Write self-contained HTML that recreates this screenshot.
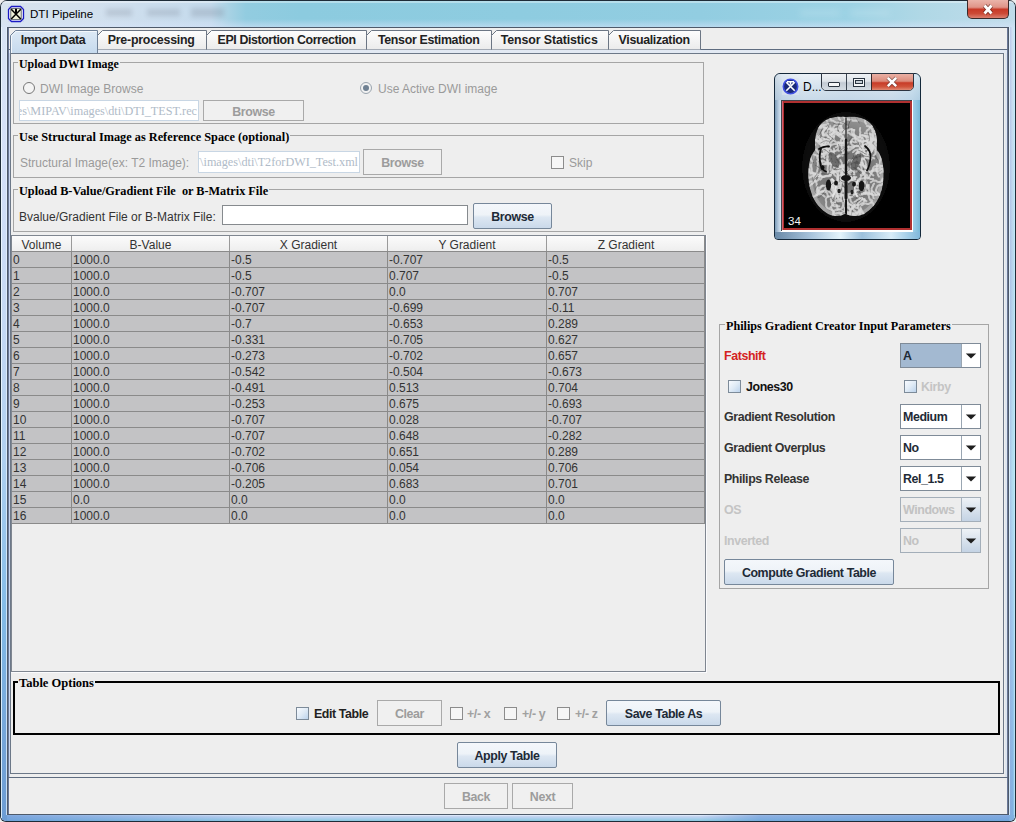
<!DOCTYPE html>
<html><head><meta charset="utf-8"><style>
html,body{margin:0;padding:0;}
body{width:1016px;height:822px;position:relative;overflow:hidden;background:#eeeeee;font-family:"Liberation Sans",sans-serif;}
.a{position:absolute;box-sizing:border-box;}
.t{line-height:20px;white-space:pre;}
</style></head><body>

<div class="a" style="left:0px;top:0px;width:1016px;height:822px;background:#1e2c38;border-radius:7px 7px 6px 6px;"></div>
<div class="a" style="left:1px;top:1px;width:1014px;height:820px;border-radius:6px 6px 5px 5px;background:#d4e0ee;"></div>
<div class="a" style="left:1px;top:27px;width:6px;height:794px;border-radius:0 0 0 5px;background:linear-gradient(#d8e4f4 0px,#d4e0f8 130px,#c4d8f4 300px,#b0d0f0 430px,#84bce8 580px,#74a4d8 720px,#6c9cd4 793px);"></div>
<div class="a" style="left:1009px;top:27px;width:6px;height:794px;border-radius:0 0 5px 0;background:linear-gradient(#d0e0f2 0px,#b8d4ec 250px,#b4dcf0 450px,#a0c8ec 600px,#80b0e0 793px);"></div>
<div class="a" style="left:1010px;top:27px;width:5px;height:788px;background:linear-gradient(90deg,rgba(150,160,220,.35),rgba(150,200,240,0) 50%,rgba(180,240,250,.5));"></div>
<div class="a" style="left:7px;top:815px;width:1002px;height:6px;background:linear-gradient(#e4f0ff 0,#c4d4f0 1.5px,#b0d0ee 3px,#98cce4 5px,#88c8e0 6px);"></div>
<div class="a" style="left:7px;top:815px;width:294px;height:6px;background:linear-gradient(90deg,rgba(100,150,215,.75) 0,rgba(100,150,215,.55) 80px,rgba(100,150,215,0) 280px);"></div>
<div class="a" style="left:700px;top:815px;width:309px;height:6px;background:linear-gradient(90deg,rgba(100,150,215,0) 0,rgba(100,150,215,.6) 60px,rgba(100,150,215,.7) 308px);"></div>
<div class="a" style="left:1px;top:27px;width:1px;height:791px;background:rgba(240,250,255,.8);"></div>
<div class="a" style="left:6px;top:27px;width:1px;height:788px;background:rgba(230,242,255,.75);"></div>
<div class="a" style="left:1009px;top:27px;width:1px;height:788px;background:rgba(230,242,255,.75);"></div>
<div class="a" style="left:1014px;top:27px;width:1px;height:791px;background:rgba(200,235,250,.5);"></div>
<div class="a" style="left:1px;top:1px;width:1014px;height:26px;border-radius:6px 6px 0 0;background:linear-gradient(90deg,#d8e4ee 0px,#d2e0ee 90px,#c4daec 210px,#a8d2e4 228px,#92cce0 245px,#8ccbdf 300px,#8ecce0 520px,#92cde1 700px,#9cd2e4 850px,#b0d8e6 920px,#c0dcea 1016px);"></div>
<div class="a" style="left:1px;top:19px;width:1014px;height:8px;background:linear-gradient(rgba(225,235,250,0),rgba(215,228,250,.55));"></div>
<div class="a" style="left:1px;top:1px;width:1014px;height:2px;border-radius:6px 6px 0 0;background:rgba(255,255,255,.35);"></div>
<div class="a" style="left:100px;top:5px;width:140px;height:16px;filter:blur(2.5px);opacity:.13;"><div class="a" style="left:6px;top:4px;width:26px;height:7px;background:#223;"></div><div class="a" style="left:47px;top:4px;width:33px;height:7px;background:#223;"></div><div class="a" style="left:91px;top:3px;width:33px;height:9px;background:#223;"></div></div>
<div class="a" style="left:770px;top:6px;width:130px;height:14px;filter:blur(3px);opacity:.12;"><div class="a" style="left:30px;top:3px;width:40px;height:8px;background:#fff;"></div><div class="a" style="left:80px;top:3px;width:40px;height:8px;background:#fff;"></div></div>
<svg class="a" style="left:0px;top:0px" width="30" height="28" viewBox="0 0 30 28"><rect x="8" y="6" width="16" height="16" fill="#c4ccee" opacity=".55"/><path d="M11.5 6.5H20.5L23.5 9.5V18.5L20.5 21.5H11.5L8.5 18.5V9.5Z" fill="#f4f4fa" stroke="#1a1ac4" stroke-width="1.3"/><rect x="10.8" y="8.6" width="10.4" height="10.8" fill="#eef0d8" stroke="#505860" stroke-width=".8"/><path d="M11.2 9.2L20.8 19M20.8 9.2L11.2 19" stroke="#000" stroke-width="1.5"/><path d="M16 8.8V14" stroke="#000" stroke-width="2"/></svg>
<div class="a t" style="left:30px;top:4px;font-size:11.6px;font-weight:normal;font-family:'Liberation Sans',sans-serif;color:#000;">DTI Pipeline</div>
<div class="a" style="left:967px;top:0px;width:42px;height:19px;border:1px solid #3a2a2a;border-top:none;border-radius:0 0 5px 5px;background:linear-gradient(#eab4aa 0%,#e09488 40%,#c83a28 52%,#cc4a36 75%,#dc8070 100%);"></div>
<svg class="a" style="left:981px;top:3px" width="14" height="13" viewBox="0 0 14 13"><path d="M3.5 2.5L10.5 10.5M10.5 2.5L3.5 10.5" stroke="#4a1a14" stroke-width="4.4" opacity=".6"/><path d="M3.5 2.5L10.5 10.5M10.5 2.5L3.5 10.5" stroke="#fff" stroke-width="2.8"/></svg>
<div class="a" style="left:7px;top:27px;width:1002px;height:788px;border:1px solid #4e5a6a;background:#eeeeee;"></div>
<div class="a" style="left:8px;top:28px;width:1px;height:786px;background:#6a7898;"></div>
<div class="a" style="left:9px;top:50px;width:1px;height:727px;background:#c8d6ee;"></div>
<div class="a" style="left:1007px;top:28px;width:1px;height:786px;background:#6a7898;"></div>
<div class="a" style="left:1005px;top:50px;width:2px;height:727px;background:#dde6f0;"></div>
<div class="a" style="left:8px;top:49px;width:1000px;height:729px;border:1px solid #5e6c80;border-left:none;border-right:none;"></div>
<div class="a" style="left:9px;top:50px;width:998px;height:3px;background:#e2e9f3;"></div>
<div class="a" style="left:10px;top:53px;width:994px;height:721px;border:1px solid #6c7888;"></div>
<svg class="a" style="left:0;top:0" width="1016" height="60"><defs><linearGradient id="tg" x1="0" y1="0" x2="0" y2="1"><stop offset="0" stop-color="#fdfdfd"/><stop offset="1" stop-color="#ebebeb"/></linearGradient><linearGradient id="sg" x1="0" y1="0" x2="0" y2="1"><stop offset="0" stop-color="#dde9f5"/><stop offset="1" stop-color="#c6daee"/></linearGradient></defs><path d="M97.5 49.5V35.5L102.5 30.5H206.5V49.5" fill="url(#tg)" stroke="#6c7684" stroke-width="1" stroke-linejoin="miter"/><path d="M206.5 49.5V35.5L211.5 30.5H366.5V49.5" fill="url(#tg)" stroke="#6c7684" stroke-width="1" stroke-linejoin="miter"/><path d="M366.5 49.5V35.5L371.5 30.5H491.5V49.5" fill="url(#tg)" stroke="#6c7684" stroke-width="1" stroke-linejoin="miter"/><path d="M491.5 49.5V35.5L496.5 30.5H608.5V49.5" fill="url(#tg)" stroke="#6c7684" stroke-width="1" stroke-linejoin="miter"/><path d="M608.5 49.5V35.5L613.5 30.5H700.5V49.5" fill="url(#tg)" stroke="#6c7684" stroke-width="1" stroke-linejoin="miter"/><path d="M10.5 53V35.5L15.5 30.5H97.5V53" fill="url(#sg)" stroke="#6f8198" stroke-width="1"/><path d="M11.5 53V36L16 31.5H96.5" fill="none" stroke="#f4f8fc" stroke-width="1"/></svg>
<div class="a t" style="left:-47.3px;width:200px;text-align:center;top:30px;font-size:12.4px;font-weight:bold;color:#222;letter-spacing:-0.395px;text-indent:0.395px">Import Data</div>
<div class="a t" style="left:51.1px;width:200px;text-align:center;top:30px;font-size:12.4px;font-weight:bold;color:#222;letter-spacing:-0.234px;text-indent:0.234px">Pre-processing</div>
<div class="a t" style="left:186.4px;width:200px;text-align:center;top:30px;font-size:12.4px;font-weight:bold;color:#222;letter-spacing:-0.402px;text-indent:0.402px">EPI Distortion Correction</div>
<div class="a t" style="left:328.6px;width:200px;text-align:center;top:30px;font-size:12.4px;font-weight:bold;color:#222;letter-spacing:-0.331px;text-indent:0.331px">Tensor Estimation</div>
<div class="a t" style="left:449.2px;width:200px;text-align:center;top:30px;font-size:12.4px;font-weight:bold;color:#222;letter-spacing:-0.121px;text-indent:0.121px">Tensor Statistics</div>
<div class="a t" style="left:554.0px;width:200px;text-align:center;top:30px;font-size:12.4px;font-weight:bold;color:#222;letter-spacing:-0.337px;text-indent:0.337px">Visualization</div>
<div class="a" style="left:13px;top:62px;width:691px;height:62px;border:1px solid #a5a5a5;"></div>
<div class="a t" style="left:18px;top:54px;padding:0 1px;background:#eeeeee;font-size:11.9px;font-weight:bold;font-family:'Liberation Serif',serif;color:#000;">Upload DWI Image</div>
<div class="a" style="left:23px;top:82px;width:12px;height:12px;border:1px solid #777;border-radius:50%;box-sizing:border-box;background:#f4f4f4;"></div>
<div class="a t" style="left:40px;top:79px;font-size:12px;font-weight:normal;font-family:'Liberation Sans',sans-serif;color:#9a9a9a;">DWI Image Browse</div>
<div class="a" style="left:360px;top:82px;width:12px;height:12px;border:1px solid #9aa4ae;border-radius:50%;box-sizing:border-box;background:#f2f2f2;"></div>
<div class="a" style="left:363px;top:85px;width:6px;height:6px;border-radius:50%;background:#6f8092;"></div>
<div class="a t" style="left:378px;top:79px;font-size:12px;font-weight:normal;font-family:'Liberation Sans',sans-serif;color:#9a9a9a;">Use Active DWI image</div>
<div class="a" style="left:19px;top:100px;width:180px;height:21px;border:1px solid #c8d6e4;background:#fff;overflow:hidden;"></div>
<div class="a" style="left:20px;top:101px;width:177px;height:19px;overflow:hidden;"><div class="a t" style="right:0px;top:0px;font-family:'Liberation Serif',serif;font-size:12.2px;color:#b0bbc8;">es\MIPAV\images\dti\DTI_TEST.rec</div></div>
<div class="a" style="left:203px;top:100px;width:101px;height:21px;border:1px solid #a9a9a9;background:#f0f0f0;"></div>
<div class="a t" style="left:203px;width:101px;text-align:center;top:102px;font-size:12.4px;font-weight:bold;font-family:'Liberation Sans',sans-serif;color:#9c9c9c;letter-spacing:-0.4px;">Browse</div>
<div class="a" style="left:13px;top:135px;width:691px;height:43px;border:1px solid #a5a5a5;"></div>
<div class="a t" style="left:18px;top:127px;padding:0 1px;background:#eeeeee;font-size:12.3px;font-weight:bold;font-family:'Liberation Serif',serif;color:#000;">Use Structural Image as Reference Space (optional)</div>
<div class="a t" style="left:20px;top:153px;font-size:12px;font-weight:normal;font-family:'Liberation Sans',sans-serif;color:#9a9a9a;">Structural Image(ex: T2 Image):</div>
<div class="a" style="left:198px;top:151px;width:162px;height:22px;border:1px solid #c8d6e4;background:#fff;"></div>
<div class="a" style="left:199px;top:152px;width:159px;height:19px;overflow:hidden;"><div class="a t" style="right:0px;top:0px;font-family:'Liberation Serif',serif;font-size:12.2px;color:#b0bbc8;">\MIPAV\images\dti\T2forDWI_Test.xml</div></div>
<div class="a" style="left:363px;top:149px;width:79px;height:26px;border:1px solid #a9a9a9;background:#f0f0f0;"></div>
<div class="a t" style="left:363px;width:79px;text-align:center;top:153px;font-size:12.4px;font-weight:bold;font-family:'Liberation Sans',sans-serif;color:#9c9c9c;letter-spacing:-0.4px;">Browse</div>
<div class="a" style="left:551px;top:156px;width:13px;height:13px;border:1px solid #8c8c8c;background:#f6f6f6;"></div>
<div class="a t" style="left:569px;top:153px;font-size:12px;font-weight:normal;font-family:'Liberation Sans',sans-serif;color:#9a9a9a;">Skip</div>
<div class="a" style="left:13px;top:189px;width:691px;height:43px;border:1px solid #a5a5a5;"></div>
<div class="a t" style="left:18px;top:181px;padding:0 1px;background:#eeeeee;font-size:12.25px;font-weight:bold;font-family:'Liberation Serif',serif;color:#000;">Upload B-Value/Gradient File  or B-Matrix File</div>
<div class="a t" style="left:19px;top:207px;font-size:12px;font-weight:normal;font-family:'Liberation Sans',sans-serif;color:#333;">Bvalue/Gradient File or B-Matrix File:</div>
<div class="a" style="left:222px;top:205px;width:246px;height:20px;border:1px solid #868a8e;background:#fff;"></div>
<div class="a" style="left:473px;top:203px;width:79px;height:26px;border:1px solid #76879a;border-radius:2px;background:linear-gradient(#f4f7fb 0%,#eef3f8 45%,#dde7f2 55%,#cad9ea 100%);"></div>
<div class="a t" style="left:473px;width:79px;text-align:center;top:207px;font-size:12.4px;font-weight:bold;font-family:'Liberation Sans',sans-serif;color:#1e2a36;letter-spacing:-0.4px;">Browse</div>
<div class="a" style="left:11px;top:235px;width:695px;height:437px;border:1px solid #7f8690;"></div>
<div class="a" style="left:706px;top:235px;width:1px;height:438px;background:#fbfbfd;"></div>
<div class="a" style="left:11px;top:672px;width:696px;height:1px;background:#fbfbfd;"></div>
<div class="a" style="left:12px;top:236px;width:693px;height:15px;background:linear-gradient(#fbfbfb,#eeeeee);"></div>
<div class="a" style="left:12px;top:251px;width:693px;height:1px;background:#8a8a8a;"></div>
<div class="a t" style="left:12px;width:59px;text-align:center;top:235px;font-size:12px;font-weight:normal;font-family:'Liberation Sans',sans-serif;color:#333;">Volume</div>
<div class="a t" style="left:72px;width:157px;text-align:center;top:235px;font-size:12px;font-weight:normal;font-family:'Liberation Sans',sans-serif;color:#333;">B-Value</div>
<div class="a t" style="left:230px;width:157px;text-align:center;top:235px;font-size:12px;font-weight:normal;font-family:'Liberation Sans',sans-serif;color:#333;">X Gradient</div>
<div class="a t" style="left:388px;width:158px;text-align:center;top:235px;font-size:12px;font-weight:normal;font-family:'Liberation Sans',sans-serif;color:#333;">Y Gradient</div>
<div class="a t" style="left:547px;width:158px;text-align:center;top:235px;font-size:12px;font-weight:normal;font-family:'Liberation Sans',sans-serif;color:#333;">Z Gradient</div>
<div class="a" style="left:71px;top:236px;width:1px;height:15px;background:#9a9a9a;"></div>
<div class="a" style="left:229px;top:236px;width:1px;height:15px;background:#9a9a9a;"></div>
<div class="a" style="left:387px;top:236px;width:1px;height:15px;background:#9a9a9a;"></div>
<div class="a" style="left:546px;top:236px;width:1px;height:15px;background:#9a9a9a;"></div>
<div class="a" style="left:12px;top:252px;width:693px;height:272px;background:#c3c3c5;"></div>
<div class="a" style="left:12px;top:267px;width:693px;height:1px;background:#8a8a8a;"></div>
<div class="a t" style="left:13px;top:250px;font-size:12px;font-weight:normal;font-family:'Liberation Sans',sans-serif;color:#333;">0</div>
<div class="a t" style="left:73px;top:250px;font-size:12px;font-weight:normal;font-family:'Liberation Sans',sans-serif;color:#333;">1000.0</div>
<div class="a t" style="left:231px;top:250px;font-size:12px;font-weight:normal;font-family:'Liberation Sans',sans-serif;color:#333;">-0.5</div>
<div class="a t" style="left:389px;top:250px;font-size:12px;font-weight:normal;font-family:'Liberation Sans',sans-serif;color:#333;">-0.707</div>
<div class="a t" style="left:548px;top:250px;font-size:12px;font-weight:normal;font-family:'Liberation Sans',sans-serif;color:#333;">-0.5</div>
<div class="a" style="left:12px;top:283px;width:693px;height:1px;background:#8a8a8a;"></div>
<div class="a t" style="left:13px;top:266px;font-size:12px;font-weight:normal;font-family:'Liberation Sans',sans-serif;color:#333;">1</div>
<div class="a t" style="left:73px;top:266px;font-size:12px;font-weight:normal;font-family:'Liberation Sans',sans-serif;color:#333;">1000.0</div>
<div class="a t" style="left:231px;top:266px;font-size:12px;font-weight:normal;font-family:'Liberation Sans',sans-serif;color:#333;">-0.5</div>
<div class="a t" style="left:389px;top:266px;font-size:12px;font-weight:normal;font-family:'Liberation Sans',sans-serif;color:#333;">0.707</div>
<div class="a t" style="left:548px;top:266px;font-size:12px;font-weight:normal;font-family:'Liberation Sans',sans-serif;color:#333;">-0.5</div>
<div class="a" style="left:12px;top:299px;width:693px;height:1px;background:#8a8a8a;"></div>
<div class="a t" style="left:13px;top:282px;font-size:12px;font-weight:normal;font-family:'Liberation Sans',sans-serif;color:#333;">2</div>
<div class="a t" style="left:73px;top:282px;font-size:12px;font-weight:normal;font-family:'Liberation Sans',sans-serif;color:#333;">1000.0</div>
<div class="a t" style="left:231px;top:282px;font-size:12px;font-weight:normal;font-family:'Liberation Sans',sans-serif;color:#333;">-0.707</div>
<div class="a t" style="left:389px;top:282px;font-size:12px;font-weight:normal;font-family:'Liberation Sans',sans-serif;color:#333;">0.0</div>
<div class="a t" style="left:548px;top:282px;font-size:12px;font-weight:normal;font-family:'Liberation Sans',sans-serif;color:#333;">0.707</div>
<div class="a" style="left:12px;top:315px;width:693px;height:1px;background:#8a8a8a;"></div>
<div class="a t" style="left:13px;top:298px;font-size:12px;font-weight:normal;font-family:'Liberation Sans',sans-serif;color:#333;">3</div>
<div class="a t" style="left:73px;top:298px;font-size:12px;font-weight:normal;font-family:'Liberation Sans',sans-serif;color:#333;">1000.0</div>
<div class="a t" style="left:231px;top:298px;font-size:12px;font-weight:normal;font-family:'Liberation Sans',sans-serif;color:#333;">-0.707</div>
<div class="a t" style="left:389px;top:298px;font-size:12px;font-weight:normal;font-family:'Liberation Sans',sans-serif;color:#333;">-0.699</div>
<div class="a t" style="left:548px;top:298px;font-size:12px;font-weight:normal;font-family:'Liberation Sans',sans-serif;color:#333;">-0.11</div>
<div class="a" style="left:12px;top:331px;width:693px;height:1px;background:#8a8a8a;"></div>
<div class="a t" style="left:13px;top:314px;font-size:12px;font-weight:normal;font-family:'Liberation Sans',sans-serif;color:#333;">4</div>
<div class="a t" style="left:73px;top:314px;font-size:12px;font-weight:normal;font-family:'Liberation Sans',sans-serif;color:#333;">1000.0</div>
<div class="a t" style="left:231px;top:314px;font-size:12px;font-weight:normal;font-family:'Liberation Sans',sans-serif;color:#333;">-0.7</div>
<div class="a t" style="left:389px;top:314px;font-size:12px;font-weight:normal;font-family:'Liberation Sans',sans-serif;color:#333;">-0.653</div>
<div class="a t" style="left:548px;top:314px;font-size:12px;font-weight:normal;font-family:'Liberation Sans',sans-serif;color:#333;">0.289</div>
<div class="a" style="left:12px;top:347px;width:693px;height:1px;background:#8a8a8a;"></div>
<div class="a t" style="left:13px;top:330px;font-size:12px;font-weight:normal;font-family:'Liberation Sans',sans-serif;color:#333;">5</div>
<div class="a t" style="left:73px;top:330px;font-size:12px;font-weight:normal;font-family:'Liberation Sans',sans-serif;color:#333;">1000.0</div>
<div class="a t" style="left:231px;top:330px;font-size:12px;font-weight:normal;font-family:'Liberation Sans',sans-serif;color:#333;">-0.331</div>
<div class="a t" style="left:389px;top:330px;font-size:12px;font-weight:normal;font-family:'Liberation Sans',sans-serif;color:#333;">-0.705</div>
<div class="a t" style="left:548px;top:330px;font-size:12px;font-weight:normal;font-family:'Liberation Sans',sans-serif;color:#333;">0.627</div>
<div class="a" style="left:12px;top:363px;width:693px;height:1px;background:#8a8a8a;"></div>
<div class="a t" style="left:13px;top:346px;font-size:12px;font-weight:normal;font-family:'Liberation Sans',sans-serif;color:#333;">6</div>
<div class="a t" style="left:73px;top:346px;font-size:12px;font-weight:normal;font-family:'Liberation Sans',sans-serif;color:#333;">1000.0</div>
<div class="a t" style="left:231px;top:346px;font-size:12px;font-weight:normal;font-family:'Liberation Sans',sans-serif;color:#333;">-0.273</div>
<div class="a t" style="left:389px;top:346px;font-size:12px;font-weight:normal;font-family:'Liberation Sans',sans-serif;color:#333;">-0.702</div>
<div class="a t" style="left:548px;top:346px;font-size:12px;font-weight:normal;font-family:'Liberation Sans',sans-serif;color:#333;">0.657</div>
<div class="a" style="left:12px;top:379px;width:693px;height:1px;background:#8a8a8a;"></div>
<div class="a t" style="left:13px;top:362px;font-size:12px;font-weight:normal;font-family:'Liberation Sans',sans-serif;color:#333;">7</div>
<div class="a t" style="left:73px;top:362px;font-size:12px;font-weight:normal;font-family:'Liberation Sans',sans-serif;color:#333;">1000.0</div>
<div class="a t" style="left:231px;top:362px;font-size:12px;font-weight:normal;font-family:'Liberation Sans',sans-serif;color:#333;">-0.542</div>
<div class="a t" style="left:389px;top:362px;font-size:12px;font-weight:normal;font-family:'Liberation Sans',sans-serif;color:#333;">-0.504</div>
<div class="a t" style="left:548px;top:362px;font-size:12px;font-weight:normal;font-family:'Liberation Sans',sans-serif;color:#333;">-0.673</div>
<div class="a" style="left:12px;top:395px;width:693px;height:1px;background:#8a8a8a;"></div>
<div class="a t" style="left:13px;top:378px;font-size:12px;font-weight:normal;font-family:'Liberation Sans',sans-serif;color:#333;">8</div>
<div class="a t" style="left:73px;top:378px;font-size:12px;font-weight:normal;font-family:'Liberation Sans',sans-serif;color:#333;">1000.0</div>
<div class="a t" style="left:231px;top:378px;font-size:12px;font-weight:normal;font-family:'Liberation Sans',sans-serif;color:#333;">-0.491</div>
<div class="a t" style="left:389px;top:378px;font-size:12px;font-weight:normal;font-family:'Liberation Sans',sans-serif;color:#333;">0.513</div>
<div class="a t" style="left:548px;top:378px;font-size:12px;font-weight:normal;font-family:'Liberation Sans',sans-serif;color:#333;">0.704</div>
<div class="a" style="left:12px;top:411px;width:693px;height:1px;background:#8a8a8a;"></div>
<div class="a t" style="left:13px;top:394px;font-size:12px;font-weight:normal;font-family:'Liberation Sans',sans-serif;color:#333;">9</div>
<div class="a t" style="left:73px;top:394px;font-size:12px;font-weight:normal;font-family:'Liberation Sans',sans-serif;color:#333;">1000.0</div>
<div class="a t" style="left:231px;top:394px;font-size:12px;font-weight:normal;font-family:'Liberation Sans',sans-serif;color:#333;">-0.253</div>
<div class="a t" style="left:389px;top:394px;font-size:12px;font-weight:normal;font-family:'Liberation Sans',sans-serif;color:#333;">0.675</div>
<div class="a t" style="left:548px;top:394px;font-size:12px;font-weight:normal;font-family:'Liberation Sans',sans-serif;color:#333;">-0.693</div>
<div class="a" style="left:12px;top:427px;width:693px;height:1px;background:#8a8a8a;"></div>
<div class="a t" style="left:13px;top:410px;font-size:12px;font-weight:normal;font-family:'Liberation Sans',sans-serif;color:#333;">10</div>
<div class="a t" style="left:73px;top:410px;font-size:12px;font-weight:normal;font-family:'Liberation Sans',sans-serif;color:#333;">1000.0</div>
<div class="a t" style="left:231px;top:410px;font-size:12px;font-weight:normal;font-family:'Liberation Sans',sans-serif;color:#333;">-0.707</div>
<div class="a t" style="left:389px;top:410px;font-size:12px;font-weight:normal;font-family:'Liberation Sans',sans-serif;color:#333;">0.028</div>
<div class="a t" style="left:548px;top:410px;font-size:12px;font-weight:normal;font-family:'Liberation Sans',sans-serif;color:#333;">-0.707</div>
<div class="a" style="left:12px;top:443px;width:693px;height:1px;background:#8a8a8a;"></div>
<div class="a t" style="left:13px;top:426px;font-size:12px;font-weight:normal;font-family:'Liberation Sans',sans-serif;color:#333;">11</div>
<div class="a t" style="left:73px;top:426px;font-size:12px;font-weight:normal;font-family:'Liberation Sans',sans-serif;color:#333;">1000.0</div>
<div class="a t" style="left:231px;top:426px;font-size:12px;font-weight:normal;font-family:'Liberation Sans',sans-serif;color:#333;">-0.707</div>
<div class="a t" style="left:389px;top:426px;font-size:12px;font-weight:normal;font-family:'Liberation Sans',sans-serif;color:#333;">0.648</div>
<div class="a t" style="left:548px;top:426px;font-size:12px;font-weight:normal;font-family:'Liberation Sans',sans-serif;color:#333;">-0.282</div>
<div class="a" style="left:12px;top:459px;width:693px;height:1px;background:#8a8a8a;"></div>
<div class="a t" style="left:13px;top:442px;font-size:12px;font-weight:normal;font-family:'Liberation Sans',sans-serif;color:#333;">12</div>
<div class="a t" style="left:73px;top:442px;font-size:12px;font-weight:normal;font-family:'Liberation Sans',sans-serif;color:#333;">1000.0</div>
<div class="a t" style="left:231px;top:442px;font-size:12px;font-weight:normal;font-family:'Liberation Sans',sans-serif;color:#333;">-0.702</div>
<div class="a t" style="left:389px;top:442px;font-size:12px;font-weight:normal;font-family:'Liberation Sans',sans-serif;color:#333;">0.651</div>
<div class="a t" style="left:548px;top:442px;font-size:12px;font-weight:normal;font-family:'Liberation Sans',sans-serif;color:#333;">0.289</div>
<div class="a" style="left:12px;top:475px;width:693px;height:1px;background:#8a8a8a;"></div>
<div class="a t" style="left:13px;top:458px;font-size:12px;font-weight:normal;font-family:'Liberation Sans',sans-serif;color:#333;">13</div>
<div class="a t" style="left:73px;top:458px;font-size:12px;font-weight:normal;font-family:'Liberation Sans',sans-serif;color:#333;">1000.0</div>
<div class="a t" style="left:231px;top:458px;font-size:12px;font-weight:normal;font-family:'Liberation Sans',sans-serif;color:#333;">-0.706</div>
<div class="a t" style="left:389px;top:458px;font-size:12px;font-weight:normal;font-family:'Liberation Sans',sans-serif;color:#333;">0.054</div>
<div class="a t" style="left:548px;top:458px;font-size:12px;font-weight:normal;font-family:'Liberation Sans',sans-serif;color:#333;">0.706</div>
<div class="a" style="left:12px;top:491px;width:693px;height:1px;background:#8a8a8a;"></div>
<div class="a t" style="left:13px;top:474px;font-size:12px;font-weight:normal;font-family:'Liberation Sans',sans-serif;color:#333;">14</div>
<div class="a t" style="left:73px;top:474px;font-size:12px;font-weight:normal;font-family:'Liberation Sans',sans-serif;color:#333;">1000.0</div>
<div class="a t" style="left:231px;top:474px;font-size:12px;font-weight:normal;font-family:'Liberation Sans',sans-serif;color:#333;">-0.205</div>
<div class="a t" style="left:389px;top:474px;font-size:12px;font-weight:normal;font-family:'Liberation Sans',sans-serif;color:#333;">0.683</div>
<div class="a t" style="left:548px;top:474px;font-size:12px;font-weight:normal;font-family:'Liberation Sans',sans-serif;color:#333;">0.701</div>
<div class="a" style="left:12px;top:507px;width:693px;height:1px;background:#8a8a8a;"></div>
<div class="a t" style="left:13px;top:490px;font-size:12px;font-weight:normal;font-family:'Liberation Sans',sans-serif;color:#333;">15</div>
<div class="a t" style="left:73px;top:490px;font-size:12px;font-weight:normal;font-family:'Liberation Sans',sans-serif;color:#333;">0.0</div>
<div class="a t" style="left:231px;top:490px;font-size:12px;font-weight:normal;font-family:'Liberation Sans',sans-serif;color:#333;">0.0</div>
<div class="a t" style="left:389px;top:490px;font-size:12px;font-weight:normal;font-family:'Liberation Sans',sans-serif;color:#333;">0.0</div>
<div class="a t" style="left:548px;top:490px;font-size:12px;font-weight:normal;font-family:'Liberation Sans',sans-serif;color:#333;">0.0</div>
<div class="a" style="left:12px;top:523px;width:693px;height:1px;background:#8a8a8a;"></div>
<div class="a t" style="left:13px;top:506px;font-size:12px;font-weight:normal;font-family:'Liberation Sans',sans-serif;color:#333;">16</div>
<div class="a t" style="left:73px;top:506px;font-size:12px;font-weight:normal;font-family:'Liberation Sans',sans-serif;color:#333;">1000.0</div>
<div class="a t" style="left:231px;top:506px;font-size:12px;font-weight:normal;font-family:'Liberation Sans',sans-serif;color:#333;">0.0</div>
<div class="a t" style="left:389px;top:506px;font-size:12px;font-weight:normal;font-family:'Liberation Sans',sans-serif;color:#333;">0.0</div>
<div class="a t" style="left:548px;top:506px;font-size:12px;font-weight:normal;font-family:'Liberation Sans',sans-serif;color:#333;">0.0</div>
<div class="a" style="left:71px;top:252px;width:1px;height:272px;background:#8a8a8a;"></div>
<div class="a" style="left:229px;top:252px;width:1px;height:272px;background:#8a8a8a;"></div>
<div class="a" style="left:387px;top:252px;width:1px;height:272px;background:#8a8a8a;"></div>
<div class="a" style="left:546px;top:252px;width:1px;height:272px;background:#8a8a8a;"></div>
<div class="a" style="left:704px;top:236px;width:1px;height:288px;background:#8a8a8a;"></div>
<div class="a" style="left:774px;top:73px;width:147px;height:167px;border:1px solid #14283a;border-radius:6px 6px 4px 4px;background:linear-gradient(90deg,#6e8eaa 0%,#b4cce0 5%,#dce8f2 20%,#c4d8ea 50%,#d0e2f0 80%,#a8d4ec 94%,#78b8d8 100%);"></div>
<div class="a" style="left:775px;top:232px;width:145px;height:7px;border-radius:0 0 3px 3px;background:linear-gradient(90deg,#6a8aa8 0%,#a8c4dc 25%,#e4f4fc 45%,#9cc0dc 60%,#d8ecf8 80%,#80b8dc 100%);"></div>
<div class="a" style="left:775px;top:100px;width:6px;height:132px;background:linear-gradient(90deg,#7c9cb8,#b8cce0 60%,#d8e6f0);"></div>
<div class="a" style="left:775px;top:74px;width:145px;height:26px;border-radius:5px 5px 0 0;background:linear-gradient(#f0f4f8 0%,#d8e4ee 45%,#c4d6e6 100%);opacity:.75;"></div>
<svg class="a" style="left:782px;top:78px" width="17" height="17" viewBox="0 0 17 17"><rect x="0" y="0" width="17" height="17" fill="#dde4f0" opacity=".6"/><circle cx="8.5" cy="8.5" r="7.2" fill="#1a2a78" stroke="#4050e0" stroke-width="1.6"/><path d="M4.3 4.3L12.7 12.7M12.7 4.3L4.3 12.7M5 3.8h7M8.5 3.8v3" stroke="#fff" stroke-width="1.6"/></svg>
<div class="a t" style="left:803px;top:77px;font-size:12px;font-weight:normal;font-family:'Liberation Sans',sans-serif;color:#000;">D...</div>
<div class="a" style="left:821px;top:73px;width:93px;height:18px;border:1px solid #2c3440;border-radius:0 0 5px 5px;overflow:hidden;background:#c8d0d8;"></div>
<div class="a" style="left:822px;top:74px;width:24px;height:16px;border-radius:0 0 0 4px;background:linear-gradient(#eef1f4 0%,#dfe4ea 45%,#c2cad4 55%,#d4dce4 100%);"></div>
<div class="a" style="left:846px;top:74px;width:1px;height:16px;background:#3a4450;"></div>
<div class="a" style="left:847px;top:74px;width:24px;height:16px;background:linear-gradient(#eef1f4 0%,#dfe4ea 45%,#c2cad4 55%,#d4dce4 100%);"></div>
<div class="a" style="left:871px;top:74px;width:1px;height:16px;background:#3a2a2a;"></div>
<div class="a" style="left:872px;top:74px;width:41px;height:16px;border-radius:0 0 4px 0;background:linear-gradient(#eab0a4 0%,#dc8c7c 45%,#c83c28 55%,#d0543c 80%,#e08a74 100%);"></div>
<div class="a" style="left:828px;top:82px;width:12px;height:5px;border:1px solid #2a3440;background:#f4f6f8;border-radius:1px;"></div>
<div class="a" style="left:853px;top:78px;width:12px;height:9px;border:1px solid #2a3440;background:#f4f6f8;"></div>
<div class="a" style="left:855px;top:80px;width:8px;height:4px;border:1px solid #2a3440;background:#c8d0d8;"></div>
<svg class="a" style="left:885px;top:76px" width="14" height="12" viewBox="0 0 14 12"><path d="M2.8 1.8L11.2 10.2M11.2 1.8L2.8 10.2" stroke="#3a2020" stroke-width="4" opacity=".55"/><path d="M2.8 1.8L11.2 10.2M11.2 1.8L2.8 10.2" stroke="#fff" stroke-width="2.6"/></svg>
<div class="a" style="left:781px;top:100px;width:132px;height:132px;background:#fff;"></div>
<div class="a" style="left:781px;top:100px;width:131px;height:1px;background:#3c444c;"></div>
<div class="a" style="left:781px;top:100px;width:1px;height:131px;background:#3c444c;"></div>
<div class="a" style="left:782px;top:101px;width:130px;height:129px;border:2px solid #b03030;background:#000;"></div>
<div class="a" style="left:782px;top:101px;width:1px;height:129px;background:#d06070;"></div>
<svg class="a" style="left:784px;top:103px" width="126" height="125" viewBox="0 0 126 125">
<defs>
<filter id="bl0" x="-5%" y="-5%" width="110%" height="110%"><feGaussianBlur stdDeviation="0.5"/></filter>
<filter id="bl1" x="-10%" y="-10%" width="120%" height="120%"><feGaussianBlur stdDeviation="0.55"/></filter>
<filter id="bl2" x="-20%" y="-20%" width="140%" height="140%"><feGaussianBlur stdDeviation="2.5"/></filter>
<filter id="blall" x="0" y="0" width="126" height="125" filterUnits="userSpaceOnUse"><feGaussianBlur stdDeviation="0.45"/></filter>
<clipPath id="bc"><path d="M62 14 C53 13 45 14 39 19 C33 24 31 32 31 40 C31 43 32 45 31 47 C27 52 25 58 24.5 67 C24 76 25 84 28 92 C31 100 37 107 44 111 C50 114 58 113.5 61.5 110.5 C65 113.5 73 114 80 111 C87 107 93 100 96 92 C99 84 100 76 99.5 67 C99 58 97 52 93 47 C92 45 93 43 93 40 C93 32 91 24 85 19 C79 14 71 13 62 14 Z"/></clipPath>
<radialGradient id="bgr" cx="50%" cy="55%" r="52%"><stop offset="0" stop-color="#707070"/><stop offset=".7" stop-color="#7a7a7a"/><stop offset="1" stop-color="#909090"/></radialGradient>
</defs>
<g filter="url(#blall)">
<ellipse cx="62" cy="64" rx="44" ry="55" fill="#0a0a0a" filter="url(#bl2)"/>
<g clip-path="url(#bc)">
<path d="M62 14 C53 13 45 14 39 19 C33 24 31 32 31 40 C31 43 32 45 31 47 C27 52 25 58 24.5 67 C24 76 25 84 28 92 C31 100 37 107 44 111 C50 114 58 113.5 61.5 110.5 C65 113.5 73 114 80 111 C87 107 93 100 96 92 C99 84 100 76 99.5 67 C99 58 97 52 93 47 C92 45 93 43 93 40 C93 32 91 24 85 19 C79 14 71 13 62 14 Z" fill="url(#bgr)"/>
<g filter="url(#bl0)" fill="none" stroke-linecap="round" stroke-linejoin="round">
<path d="M47.9 27.5 L46.5 26.9 L45.2 26.2 L43.8 25.7 L42.3 26.1 L40.9 26.4 L39.8 27.4 L38.8 28.5 L38.4 30.0 L38.9 31.4" stroke="#dadada" stroke-width="2.0" opacity="0.8"/>
<path d="M56.0 97.2 L57.3 97.8 L58.6 98.7 L59.2 100.0 L59.7 101.4 L60.4 102.8 L60.2 104.3 L60.8 105.6 L60.9 107.1 L61.2 108.6" stroke="#dadada" stroke-width="2.0" opacity="0.8"/>
<path d="M46.7 96.1 L47.2 97.5 L47.4 99.0 L47.9 100.4 L48.3 101.8 L49.4 102.9 L50.8 103.3 L52.3 103.1 L53.8 103.3 L55.3 103.3" stroke="#dadada" stroke-width="2.0" opacity="0.8"/>
<path d="M47.1 72.3 L45.8 73.1 L44.4 73.3 L42.9 73.3 L41.4 73.6 L39.9 73.9 L38.4 74.1 L37.0 73.6 L35.8 72.8 L34.4 72.2" stroke="#dadada" stroke-width="2.0" opacity="0.8"/>
<path d="M55.4 90.0 L56.3 91.2 L57.7 91.8 L59.0 92.6 L59.9 93.8 L60.7 95.0 L60.9 96.5 L61.4 97.9 L61.6 99.4 L61.6 100.9" stroke="#dadada" stroke-width="2.0" opacity="0.8"/>
<path d="M68.4 59.0 L69.7 58.3 L71.0 57.6 L72.5 57.1 L73.5 56.0 L74.7 55.2 L76.1 54.6 L77.6 54.8 L78.8 55.6 L80.3 56.1" stroke="#dadada" stroke-width="2.0" opacity="0.8"/>
<path d="M52.9 80.9 L54.4 81.0 L55.8 80.6 L56.9 79.5 L57.3 78.1 L58.1 76.9 L58.4 75.4 L58.2 73.9 L57.7 72.4 L58.0 71.0" stroke="#dadada" stroke-width="2.0" opacity="0.8"/>
<path d="M28.4 58.3 L27.4 57.2 L26.8 55.8 L26.8 54.4 L26.4 52.9 L25.9 51.5 L25.2 50.2 L25.1 48.7 L25.8 47.4 L25.9 45.9" stroke="#dadada" stroke-width="2.0" opacity="0.8"/>
<path d="M36.1 35.9 L36.3 37.4 L36.3 38.9 L36.7 40.3 L37.9 41.3 L39.2 42.1 L40.5 42.7 L41.9 43.4 L42.6 44.7 L43.1 46.1" stroke="#dadada" stroke-width="2.0" opacity="0.8"/>
<path d="M63.2 75.6 L62.0 74.8 L61.2 73.5 L61.0 72.0 L61.4 70.6 L62.2 69.4 L62.9 68.0 L63.5 66.6 L63.3 65.1 L63.4 63.7" stroke="#dadada" stroke-width="2.0" opacity="0.8"/>
<path d="M38.7 28.7 L38.7 30.2 L39.5 31.5 L40.7 32.3 L42.2 32.5 L43.7 32.4 L44.9 31.5 L46.4 31.2 L47.9 31.1 L49.2 30.5" stroke="#dadada" stroke-width="2.0" opacity="0.8"/>
<path d="M42.2 47.8 L41.8 49.2 L40.8 50.4 L39.4 50.8 L38.0 51.3 L36.6 51.8 L35.6 53.0 L35.2 54.4 L35.2 55.9 L35.5 57.4" stroke="#dadada" stroke-width="2.0" opacity="0.8"/>
<path d="M88.3 28.6 L89.5 29.6 L90.6 30.6 L92.0 31.0 L93.4 31.5 L94.9 31.2 L96.4 30.9 L97.8 31.5 L98.8 32.6 L99.5 33.9" stroke="#dadada" stroke-width="2.0" opacity="0.8"/>
<path d="M42.9 49.8 L43.2 51.2 L43.4 52.7 L43.1 54.2 L43.2 55.7 L43.7 57.1 L43.7 58.6 L42.8 59.8 L41.6 60.6 L40.1 60.9" stroke="#dadada" stroke-width="2.0" opacity="0.8"/>
<path d="M87.5 88.2 L87.7 89.7 L88.1 91.1 L89.2 92.1 L90.7 92.3 L92.2 92.1 L93.6 91.5 L95.1 91.3 L96.5 91.8 L97.9 92.2" stroke="#dadada" stroke-width="2.0" opacity="0.8"/>
<path d="M39.6 35.4 L40.6 36.5 L41.4 37.8 L41.5 39.3 L40.9 40.7 L40.5 42.1 L39.7 43.4 L38.6 44.4 L38.1 45.8 L37.3 47.1" stroke="#dadada" stroke-width="2.0" opacity="0.8"/>
<path d="M82.0 61.2 L82.2 62.7 L82.6 64.2 L82.5 65.7 L81.6 66.9 L80.9 68.2 L80.4 69.6 L79.2 70.5 L77.8 71.1 L76.7 72.1" stroke="#dadada" stroke-width="2.0" opacity="0.8"/>
<path d="M50.0 68.5 L51.5 68.9 L52.5 70.0 L53.4 71.2 L54.1 72.5 L54.2 74.0 L54.4 75.5 L53.9 76.9 L52.9 78.0 L52.3 79.4" stroke="#dadada" stroke-width="2.0" opacity="0.8"/>
<path d="M42.1 42.2 L42.1 43.7 L42.4 45.1 L42.9 46.5 L44.0 47.6 L44.4 49.0 L45.1 50.4 L45.9 51.7 L46.5 53.1 L46.4 54.6" stroke="#dadada" stroke-width="2.0" opacity="0.8"/>
<path d="M55.7 106.5 L54.2 106.5 L52.7 106.3 L51.3 107.1 L50.1 107.9 L49.2 109.1 L49.2 110.6 L48.6 112.0 L48.6 113.5 L48.7 115.0" stroke="#dadada" stroke-width="2.0" opacity="0.8"/>
<path d="M80.0 69.3 L79.3 70.6 L78.5 71.9 L77.3 72.8 L76.7 74.2 L76.0 75.5 L75.6 77.0 L75.7 78.5 L75.3 79.9 L74.9 81.4" stroke="#dadada" stroke-width="2.0" opacity="0.8"/>
<path d="M66.9 90.3 L68.2 89.4 L69.5 88.7 L70.8 88.0 L72.2 87.4 L73.6 87.0 L75.1 86.6 L76.5 86.2 L78.0 85.8 L79.4 86.2" stroke="#dadada" stroke-width="2.0" opacity="0.8"/>
<path d="M77.9 102.3 L79.1 101.4 L80.4 100.6 L81.9 100.5 L83.3 101.0 L84.8 100.9 L86.1 100.1 L87.3 99.3 L88.0 97.9 L88.2 96.5" stroke="#dadada" stroke-width="2.0" opacity="0.8"/>
<path d="M27.8 81.0 L28.8 79.8 L29.2 78.4 L30.0 77.1 L31.0 75.9 L31.4 74.5 L32.4 73.4 L33.9 73.0 L35.1 72.2 L36.6 72.1" stroke="#dadada" stroke-width="2.0" opacity="0.8"/>
<path d="M53.9 62.2 L55.3 62.7 L56.8 62.6 L58.3 62.3 L59.7 62.1 L61.2 61.7 L62.3 60.7 L63.2 59.5 L64.4 58.6 L65.0 57.2" stroke="#dadada" stroke-width="2.0" opacity="0.8"/>
<path d="M66.3 57.4 L67.8 57.2 L69.3 57.3 L70.8 57.4 L72.2 56.8 L73.6 57.0 L75.0 57.7 L75.7 59.0 L77.0 59.8 L78.4 60.2" stroke="#dadada" stroke-width="2.0" opacity="0.8"/>
<path d="M43.6 25.3 L42.1 25.3 L40.7 24.8 L39.3 24.6 L37.8 25.1 L36.4 24.8 L34.9 24.4 L33.6 23.7 L32.1 23.7 L30.8 24.4" stroke="#dadada" stroke-width="2.0" opacity="0.8"/>
<path d="M77.1 55.8 L77.9 57.1 L78.5 58.4 L78.6 59.9 L79.4 61.2 L79.6 62.7 L80.5 63.9 L80.9 65.3 L81.3 66.8 L82.0 68.1" stroke="#dadada" stroke-width="2.0" opacity="0.8"/>
<path d="M66.2 107.4 L66.7 108.9 L67.2 110.3 L68.0 111.5 L69.4 112.2 L70.9 112.3 L72.2 111.7 L73.2 110.6 L74.0 109.3 L74.4 107.9" stroke="#dadada" stroke-width="2.0" opacity="0.8"/>
<path d="M82.8 41.9 L81.4 42.4 L80.1 43.2 L79.5 44.6 L79.3 46.1 L80.0 47.4 L80.2 48.9 L80.4 50.4 L81.1 51.7 L81.9 53.0" stroke="#dadada" stroke-width="2.0" opacity="0.8"/>
<path d="M87.5 56.5 L86.1 56.0 L84.7 55.6 L83.2 55.2 L81.9 54.6 L81.1 53.3 L80.2 52.1 L79.7 50.7 L79.6 49.2 L79.8 47.7" stroke="#dadada" stroke-width="2.0" opacity="0.8"/>
<path d="M54.4 47.8 L55.9 47.6 L57.1 46.8 L58.5 46.3 L59.7 45.4 L60.5 44.1 L60.6 42.6 L61.2 41.3 L62.4 40.4 L63.8 39.7" stroke="#dadada" stroke-width="2.0" opacity="0.8"/>
<path d="M44.6 36.9 L44.2 38.4 L44.5 39.9 L44.9 41.3 L45.7 42.6 L45.6 44.1 L44.8 45.4 L43.9 46.6 L43.4 48.0 L42.2 48.9" stroke="#dadada" stroke-width="2.0" opacity="0.8"/>
<path d="M46.8 48.7 L48.3 48.5 L49.7 48.3 L51.2 48.0 L52.5 47.3 L53.8 46.5 L54.5 45.2 L54.7 43.7 L54.3 42.3 L53.7 40.9" stroke="#dadada" stroke-width="2.0" opacity="0.8"/>
<path d="M46.3 36.0 L45.1 35.2 L44.1 34.0 L43.4 32.7 L43.0 31.3 L43.3 29.8 L43.4 28.3 L43.2 26.8 L43.9 25.4 L43.9 23.9" stroke="#dadada" stroke-width="2.0" opacity="0.8"/>
<path d="M79.9 78.3 L81.1 79.2 L81.7 80.6 L82.1 82.0 L82.1 83.5 L81.5 84.9 L81.6 86.4 L81.6 87.9 L81.7 89.4 L81.1 90.8" stroke="#dadada" stroke-width="2.0" opacity="0.8"/>
<path d="M86.4 97.1 L85.6 95.9 L85.0 94.5 L84.9 93.0 L84.2 91.6 L83.0 90.8 L81.5 90.6 L80.0 90.7 L78.7 91.4 L77.2 91.6" stroke="#dadada" stroke-width="2.0" opacity="0.8"/>
<path d="M66.7 76.7 L65.9 75.4 L65.1 74.1 L63.7 73.5 L62.6 72.5 L61.9 71.2 L61.1 69.9 L60.5 68.6 L60.0 67.1 L59.0 66.1" stroke="#dadada" stroke-width="2.0" opacity="0.8"/>
<path d="M80.9 38.0 L82.4 38.3 L83.8 38.9 L85.3 39.1 L86.6 39.7 L87.5 40.9 L88.3 42.1 L89.4 43.2 L90.4 44.3 L91.2 45.6" stroke="#dadada" stroke-width="2.0" opacity="0.8"/>
<path d="M83.4 75.5 L82.0 75.0 L80.5 75.0 L79.1 75.5 L77.6 75.6 L76.1 76.0 L74.6 76.3 L73.6 77.3 L73.2 78.7 L73.2 80.2" stroke="#dadada" stroke-width="2.0" opacity="0.8"/>
<path d="M75.8 83.3 L74.8 82.2 L73.8 81.0 L72.8 79.9 L71.7 78.8 L70.3 78.4 L69.3 77.3 L67.9 76.6 L67.1 75.4 L67.1 73.9" stroke="#dadada" stroke-width="2.0" opacity="0.8"/>
<path d="M58.0 39.7 L57.5 41.1 L57.6 42.6 L57.6 44.1 L58.2 45.5 L58.7 46.9 L58.4 48.4 L58.8 49.8 L58.7 51.3 L58.5 52.8" stroke="#dadada" stroke-width="2.0" opacity="0.8"/>
<path d="M92.9 84.4 L92.4 85.8 L91.9 87.3 L92.3 88.7 L93.4 89.7 L94.5 90.8 L95.6 91.7 L97.0 92.3 L98.5 92.4 L100.0 92.1" stroke="#dadada" stroke-width="2.0" opacity="0.8"/>
<path d="M47.3 98.5 L48.7 99.0 L49.8 100.0 L51.3 100.4 L52.4 101.4 L53.1 102.7 L53.2 104.2 L53.7 105.6 L54.4 107.0 L55.2 108.2" stroke="#dadada" stroke-width="2.0" opacity="0.8"/>
<path d="M50.9 56.1 L51.4 57.5 L52.6 58.5 L53.2 59.8 L54.2 60.9 L54.5 62.4 L55.2 63.7 L56.3 64.8 L57.3 65.9 L58.7 66.5" stroke="#dadada" stroke-width="2.0" opacity="0.8"/>
<path d="M51.9 110.5 L53.3 110.0 L54.7 109.7 L56.2 110.1 L57.2 111.2 L58.1 112.4 L58.7 113.8 L60.0 114.6 L60.9 115.8 L61.9 116.9" stroke="#dadada" stroke-width="2.0" opacity="0.8"/>
<path d="M82.2 78.4 L82.7 79.8 L82.4 81.3 L82.8 82.7 L83.2 84.2 L83.8 85.5 L84.8 86.6 L85.4 88.0 L85.2 89.5 L85.4 91.0" stroke="#dadada" stroke-width="2.0" opacity="0.8"/>
<path d="M74.5 43.0 L73.0 42.6 L71.5 42.9 L70.3 43.7 L69.4 44.9 L68.0 45.5 L66.7 46.2 L65.6 47.2 L64.1 47.6 L62.7 47.2" stroke="#dadada" stroke-width="2.0" opacity="0.8"/>
<path d="M58.0 26.4 L59.1 27.4 L60.4 28.1 L61.9 28.2 L63.4 27.8 L64.6 27.0 L66.0 26.3 L67.5 26.2 L68.9 26.7 L70.4 26.9" stroke="#dadada" stroke-width="2.0" opacity="0.8"/>
<path d="M55.1 66.0 L54.3 67.2 L54.1 68.7 L54.4 70.2 L53.9 71.6 L54.0 73.1 L54.1 74.6 L54.0 76.1 L53.2 77.4 L53.0 78.9" stroke="#dadada" stroke-width="2.0" opacity="0.8"/>
<path d="M43.7 37.6 L42.5 38.6 L41.0 38.8 L39.6 38.4 L38.5 37.4 L37.0 37.2 L35.6 37.8 L34.1 38.0 L32.7 37.6 L31.3 37.2" stroke="#dadada" stroke-width="2.0" opacity="0.8"/>
<path d="M53.3 107.5 L54.5 106.5 L56.0 106.4 L57.4 105.8 L58.3 104.6 L58.8 103.2 L59.2 101.8 L60.0 100.5 L61.3 99.7 L62.7 99.4" stroke="#dadada" stroke-width="2.0" opacity="0.8"/>
<path d="M73.8 90.8 L72.3 91.1 L71.2 92.1 L69.9 92.7 L68.8 93.7 L67.3 94.1 L65.8 94.2 L64.4 94.6 L63.3 95.6 L62.5 96.9" stroke="#dadada" stroke-width="2.0" opacity="0.8"/>
<path d="M72.9 84.0 L74.4 84.2 L75.8 84.6 L77.3 85.0 L78.7 85.3 L80.2 85.1 L81.7 85.0 L82.9 84.2 L83.9 83.0 L84.9 81.9" stroke="#dadada" stroke-width="2.0" opacity="0.8"/>
<path d="M92.7 61.0 L93.3 62.3 L93.1 63.8 L92.5 65.2 L92.2 66.7 L92.8 68.1 L93.4 69.4 L93.7 70.9 L94.1 72.3 L95.0 73.6" stroke="#dadada" stroke-width="2.0" opacity="0.8"/>
<path d="M75.4 107.3 L76.4 108.4 L77.5 109.4 L78.8 110.2 L79.8 111.3 L81.2 111.9 L82.3 112.9 L83.0 114.3 L83.7 115.6 L84.8 116.6" stroke="#dadada" stroke-width="2.0" opacity="0.8"/>
<path d="M87.6 35.8 L87.4 37.3 L87.6 38.8 L86.9 40.1 L86.3 41.5 L86.3 43.0 L86.7 44.4 L87.2 45.8 L87.5 47.3 L87.0 48.7" stroke="#dadada" stroke-width="2.0" opacity="0.8"/>
<path d="M33.7 52.5 L33.2 53.9 L33.4 55.4 L34.2 56.6 L35.6 57.2 L37.1 57.7 L38.1 58.7 L38.7 60.1 L38.8 61.6 L38.0 62.9" stroke="#dadada" stroke-width="2.0" opacity="0.8"/>
<path d="M75.2 51.0 L74.3 52.3 L74.1 53.7 L74.7 55.1 L75.6 56.3 L76.8 57.2 L77.2 58.7 L78.3 59.8 L78.6 61.2 L79.4 62.5" stroke="#dadada" stroke-width="2.0" opacity="0.8"/>
<path d="M50.5 96.6 L51.1 95.2 L50.8 93.7 L50.5 92.3 L50.0 90.9 L50.2 89.4 L49.9 87.9 L49.3 86.5 L49.5 85.0 L48.8 83.7" stroke="#dadada" stroke-width="2.0" opacity="0.8"/>
<path d="M54.9 95.6 L54.2 94.3 L53.0 93.5 L51.5 93.4 L50.2 92.6 L48.7 92.2 L47.4 91.5 L46.7 90.2 L45.7 89.1 L44.4 88.3" stroke="#dadada" stroke-width="2.0" opacity="0.8"/>
<path d="M98.6 75.5 L98.1 77.0 L97.9 78.5 L98.2 79.9 L99.2 81.0 L99.8 82.4 L99.7 83.9 L99.4 85.4 L98.4 86.5 L98.1 87.9" stroke="#dadada" stroke-width="2.0" opacity="0.8"/>
<path d="M40.7 60.9 L42.2 61.3 L43.6 61.6 L45.1 61.3 L46.6 60.9 L48.0 60.6 L49.5 61.0 L51.0 60.8 L52.4 61.1 L53.7 61.9" stroke="#dadada" stroke-width="2.0" opacity="0.8"/>
<path d="M87.8 91.6 L86.5 90.9 L85.0 90.6 L83.5 90.4 L82.2 89.8 L80.7 89.9 L79.3 90.6 L77.8 90.8 L76.5 91.4 L75.6 92.7" stroke="#dadada" stroke-width="2.0" opacity="0.8"/>
<path d="M24.7 68.9 L23.4 69.7 L21.9 69.7 L20.6 69.0 L19.2 68.6 L17.7 69.0 L16.6 70.0 L15.5 71.0 L14.2 71.7 L12.9 72.5" stroke="#dadada" stroke-width="2.0" opacity="0.8"/>
<path d="M40.7 54.9 L39.9 53.7 L39.4 52.3 L39.6 50.8 L40.0 49.4 L39.8 47.9 L40.2 46.4 L40.2 44.9 L40.4 43.4 L40.3 41.9" stroke="#dadada" stroke-width="2.0" opacity="0.8"/>
<path d="M81.0 32.5 L81.5 33.9 L82.5 35.0 L82.9 36.5 L83.2 38.0 L83.8 39.4 L84.5 40.7 L84.4 42.2 L84.3 43.6 L84.6 45.1" stroke="#dadada" stroke-width="2.0" opacity="0.8"/>
<path d="M86.7 79.3 L88.0 78.5 L89.2 77.7 L90.7 77.5 L92.2 77.8 L93.3 78.8 L94.8 79.0 L96.3 78.9 L97.6 78.2 L98.5 77.0" stroke="#dadada" stroke-width="2.0" opacity="0.8"/>
<path d="M96.4 50.3 L97.3 49.2 L97.9 47.8 L98.9 46.6 L100.3 46.2 L101.4 45.1 L102.5 44.1 L103.8 43.4 L104.8 42.2 L105.5 40.9" stroke="#dadada" stroke-width="2.0" opacity="0.8"/>
<path d="M33.3 33.0 L33.1 34.5 L32.6 35.9 L32.6 37.4 L33.5 38.6 L34.6 39.7 L35.4 40.9 L36.7 41.7 L38.1 42.3 L39.6 42.3" stroke="#dadada" stroke-width="2.0" opacity="0.8"/>
<path d="M85.6 68.4 L87.1 68.3 L88.6 68.0 L90.1 67.8 L91.6 67.8 L92.9 67.2 L93.9 66.0 L95.1 65.1 L96.2 64.1 L97.0 62.8" stroke="#dadada" stroke-width="2.0" opacity="0.8"/>
<path d="M47.0 70.4 L46.2 71.6 L44.9 72.4 L43.4 72.4 L41.9 72.5 L40.6 73.3 L39.1 73.6 L37.9 74.4 L37.3 75.8 L36.1 76.7" stroke="#dadada" stroke-width="2.0" opacity="0.8"/>
<path d="M55.9 96.5 L54.4 96.7 L52.9 97.0 L51.7 97.8 L51.1 99.2 L50.4 100.5 L49.5 101.7 L48.2 102.3 L47.3 103.5 L46.2 104.6" stroke="#dadada" stroke-width="2.0" opacity="0.8"/>
<path d="M51.7 64.0 L52.9 64.9 L54.0 65.8 L54.6 67.2 L55.7 68.2 L56.8 69.2 L57.5 70.5 L57.4 72.0 L57.9 73.4 L58.9 74.5" stroke="#dadada" stroke-width="2.0" opacity="0.8"/>
<path d="M60.6 17.5 L61.9 16.7 L63.3 16.5 L64.8 16.5 L66.2 17.1 L67.7 17.2 L69.1 17.7 L70.6 17.7 L72.1 17.6 L73.5 18.1" stroke="#dadada" stroke-width="2.0" opacity="0.8"/>
<path d="M88.3 30.8 L88.8 32.3 L89.2 33.7 L89.9 35.1 L91.1 36.0 L92.4 36.6 L93.6 37.5 L94.3 38.8 L95.6 39.6 L96.8 40.5" stroke="#dadada" stroke-width="2.0" opacity="0.8"/>
<path d="M70.0 68.7 L68.7 67.9 L67.4 67.2 L66.1 66.4 L64.8 65.7 L63.6 64.7 L62.4 63.9 L61.1 63.1 L59.6 63.2 L58.1 63.0" stroke="#dadada" stroke-width="2.0" opacity="0.8"/>
<path d="M61.2 36.2 L61.8 34.9 L62.3 33.5 L62.3 32.0 L62.2 30.5 L61.5 29.2 L60.3 28.3 L59.0 27.6 L57.5 27.5 L56.0 27.6" stroke="#dadada" stroke-width="2.0" opacity="0.8"/>
<path d="M62.8 16.2 L61.4 15.7 L60.2 14.8 L59.4 13.5 L58.5 12.3 L57.2 11.7 L55.8 11.0 L54.4 10.5 L53.4 9.4 L52.0 8.8" stroke="#dadada" stroke-width="2.0" opacity="0.8"/>
<path d="M80.6 95.9 L80.2 97.4 L79.9 98.9 L78.9 100.0 L77.4 100.4 L76.3 101.4 L74.9 101.9 L73.4 101.7 L72.0 102.2 L70.7 103.0" stroke="#dadada" stroke-width="2.0" opacity="0.8"/>
<path d="M82.5 28.4 L83.4 27.2 L84.7 26.4 L85.5 25.2 L86.4 23.9 L87.7 23.2 L88.8 22.2 L89.4 20.8 L90.1 19.5 L90.5 18.0" stroke="#dadada" stroke-width="2.0" opacity="0.8"/>
<path d="M76.4 104.2 L76.6 105.7 L77.5 106.9 L78.3 108.2 L79.0 109.5 L79.8 110.8 L80.0 112.2 L80.2 113.7 L80.2 115.2 L79.5 116.6" stroke="#dadada" stroke-width="2.0" opacity="0.8"/>
<path d="M72.4 52.6 L72.4 51.1 L73.3 49.9 L74.2 48.7 L75.0 47.4 L76.1 46.4 L77.2 45.4 L77.7 44.0 L78.7 42.8 L78.9 41.3" stroke="#dadada" stroke-width="2.0" opacity="0.8"/>
<path d="M87.6 38.1 L87.4 36.6 L87.4 35.1 L87.7 33.7 L87.6 32.2 L86.7 31.0 L85.3 30.4 L83.8 30.5 L82.3 30.3 L80.8 30.3" stroke="#dadada" stroke-width="2.0" opacity="0.8"/>
<path d="M63.0 104.2 L64.3 105.0 L65.5 105.9 L67.0 106.1 L68.3 105.4 L69.5 104.5 L70.1 103.1 L70.5 101.7 L70.4 100.2 L70.5 98.7" stroke="#dadada" stroke-width="2.0" opacity="0.8"/>
<path d="M69.1 33.0 L68.0 32.0 L66.6 31.6 L65.6 30.4 L64.3 29.7 L62.8 29.5 L61.4 30.1 L59.9 30.4 L58.5 30.1 L57.2 29.2" stroke="#dadada" stroke-width="2.0" opacity="0.8"/>
<path d="M54.2 39.2 L55.6 39.6 L57.0 40.1 L58.5 40.3 L59.9 40.7 L61.4 41.1 L62.5 42.1 L63.2 43.5 L64.3 44.5 L64.8 45.9" stroke="#dadada" stroke-width="2.0" opacity="0.8"/>
<path d="M25.5 66.7 L24.6 67.9 L24.4 69.4 L23.7 70.8 L23.9 72.2 L24.0 73.7 L23.3 75.1 L23.2 76.6 L23.7 78.0 L24.0 79.5" stroke="#dadada" stroke-width="2.0" opacity="0.8"/>
<path d="M62.6 78.1 L62.6 76.6 L62.2 75.1 L61.6 73.8 L60.3 73.0 L59.5 71.7 L59.3 70.2 L59.3 68.7 L58.6 67.4 L58.4 65.9" stroke="#dadada" stroke-width="2.0" opacity="0.8"/>
<path d="M81.6 59.9 L81.5 58.4 L80.8 57.1 L79.6 56.2 L78.2 55.7 L76.8 56.0 L75.4 56.6 L73.9 56.7 L72.4 56.6 L71.1 55.8" stroke="#dadada" stroke-width="2.0" opacity="0.8"/>
<path d="M78.9 39.4 L77.5 39.0 L76.3 38.2 L75.0 37.3 L73.6 36.7 L72.3 36.0 L71.6 34.7 L70.5 33.7 L70.0 32.3 L68.8 31.4" stroke="#dadada" stroke-width="2.0" opacity="0.8"/>
<path d="M42.8 36.3 L43.5 35.0 L44.6 33.9 L45.4 32.7 L46.7 31.9 L47.8 30.9 L48.6 29.6 L49.9 28.8 L51.2 28.2 L52.7 28.0" stroke="#dadada" stroke-width="2.0" opacity="0.8"/>
<path d="M59.6 98.5 L59.7 97.0 L59.7 95.5 L60.2 94.1 L60.7 92.7 L61.0 91.2 L60.7 89.7 L60.6 88.2 L59.8 86.9 L59.7 85.4" stroke="#dadada" stroke-width="2.0" opacity="0.8"/>
<path d="M49.6 26.6 L51.0 26.1 L52.5 25.9 L54.0 25.9 L55.4 26.3 L56.7 27.1 L58.2 27.1 L59.7 27.3 L61.2 27.2 L62.6 27.7" stroke="#dadada" stroke-width="2.0" opacity="0.8"/>
<path d="M89.8 95.6 L89.3 94.2 L89.1 92.7 L88.4 91.4 L87.2 90.5 L85.8 90.2 L84.4 89.5 L82.9 89.3 L81.4 89.5 L80.0 89.7" stroke="#dadada" stroke-width="2.0" opacity="0.8"/>
<path d="M44.6 85.7 L43.9 87.0 L42.5 87.7 L41.2 88.4 L39.7 88.5 L38.2 88.4 L36.9 89.1 L35.6 89.9 L34.4 90.8 L33.0 91.3" stroke="#dadada" stroke-width="2.0" opacity="0.8"/>
<path d="M49.7 84.6 L48.3 84.7 L46.8 84.2 L45.4 84.5 L43.9 84.1 L42.4 84.4 L41.3 85.4 L40.7 86.8 L39.7 87.9 L38.2 88.2" stroke="#dadada" stroke-width="2.0" opacity="0.8"/>
<path d="M61.3 94.1 L61.9 95.4 L62.8 96.7 L63.1 98.1 L63.8 99.5 L63.7 101.0 L64.0 102.4 L64.8 103.7 L65.3 105.1 L65.8 106.5" stroke="#dadada" stroke-width="2.0" opacity="0.8"/>
<path d="M30.8 77.6 L31.8 78.7 L32.5 80.0 L32.7 81.5 L32.7 83.0 L32.9 84.5 L33.3 85.9 L33.9 87.3 L33.8 88.8 L34.4 90.2" stroke="#dadada" stroke-width="2.0" opacity="0.8"/>
<path d="M38.5 39.1 L39.7 38.2 L40.8 37.2 L42.2 36.8 L43.4 35.9 L44.6 34.9 L45.8 34.1 L47.3 33.6 L48.7 33.5 L50.2 33.8" stroke="#dadada" stroke-width="2.0" opacity="0.8"/>
<path d="M49.9 45.6 L50.2 47.1 L50.1 48.6 L49.7 50.1 L49.8 51.5 L50.1 53.0 L49.8 54.5 L49.5 56.0 L49.8 57.4 L50.1 58.9" stroke="#dadada" stroke-width="2.0" opacity="0.8"/>
<path d="M37.3 43.1 L37.5 41.6 L37.1 40.1 L36.1 39.0 L34.8 38.2 L33.4 37.7 L32.0 37.1 L30.5 37.2 L29.1 37.5 L27.8 38.4" stroke="#dadada" stroke-width="2.0" opacity="0.8"/>
<path d="M30.1 51.6 L31.6 52.0 L32.9 52.7 L34.2 53.4 L35.7 53.5 L37.2 53.9 L38.6 53.6 L39.9 52.8 L41.0 51.8 L41.5 50.4" stroke="#dadada" stroke-width="2.0" opacity="0.8"/>
<path d="M53.9 93.5 L53.4 92.1 L53.1 90.6 L52.8 89.1 L51.8 88.0 L51.0 86.7 L50.1 85.5 L49.6 84.1 L49.8 82.6 L49.8 81.1" stroke="#dadada" stroke-width="2.0" opacity="0.8"/>
<path d="M67.9 89.2 L66.9 90.3 L65.6 91.0 L64.1 91.2 L62.7 90.8 L61.3 90.2 L60.4 89.0 L59.7 87.7 L59.3 86.2 L58.8 84.8" stroke="#dadada" stroke-width="2.0" opacity="0.8"/>
<path d="M47.0 76.7 L48.3 77.5 L49.3 78.6 L50.0 79.9 L50.4 81.4 L51.3 82.6 L52.2 83.8 L53.3 84.9 L54.1 86.1 L55.1 87.2" stroke="#dadada" stroke-width="2.0" opacity="0.8"/>
<path d="M76.0 107.8 L76.4 109.3 L76.2 110.8 L76.3 112.3 L76.3 113.8 L75.6 115.1 L75.6 116.6 L75.6 118.1 L76.2 119.4 L76.3 120.9" stroke="#dadada" stroke-width="2.0" opacity="0.8"/>
<path d="M97.2 65.5 L98.4 66.5 L99.4 67.5 L100.2 68.8 L101.0 70.1 L101.5 71.5 L101.4 73.0 L101.3 74.5 L101.4 76.0 L100.7 77.3" stroke="#dadada" stroke-width="2.0" opacity="0.8"/>
<path d="M38.8 82.5 L37.4 83.0 L36.4 84.1 L34.9 84.5 L33.5 85.0 L32.6 86.3 L32.1 87.7 L31.8 89.1 L32.3 90.5 L32.9 91.9" stroke="#dadada" stroke-width="2.0" opacity="0.8"/>
<path d="M55.6 83.9 L55.1 85.3 L55.1 86.8 L54.6 88.2 L53.5 89.2 L52.3 90.2 L51.5 91.5 L50.4 92.4 L49.3 93.5 L48.7 94.8" stroke="#dadada" stroke-width="2.0" opacity="0.8"/>
<path d="M32.3 92.0 L33.1 90.7 L33.8 89.4 L34.6 88.1 L35.0 86.7 L36.1 85.6 L37.0 84.4 L38.0 83.4 L39.4 82.8 L40.9 82.7" stroke="#dadada" stroke-width="2.0" opacity="0.8"/>
<path d="M59.4 42.3 L58.0 42.5 L56.5 42.2 L55.0 42.0 L53.7 41.3 L52.2 41.0 L50.7 40.9 L49.3 41.2 L47.9 41.7 L46.7 42.6" stroke="#dadada" stroke-width="2.0" opacity="0.8"/>
<path d="M44.5 37.2 L44.1 38.7 L43.7 40.1 L43.2 41.5 L42.4 42.8 L41.8 44.2 L40.6 45.1 L39.1 45.4 L38.0 46.4 L36.6 47.0" stroke="#dadada" stroke-width="2.0" opacity="0.8"/>
<path d="M74.5 37.8 L75.9 38.1 L77.4 37.9 L78.9 38.2 L80.4 38.3 L81.8 37.7 L83.3 37.9 L84.6 38.5 L86.1 38.6 L87.4 39.4" stroke="#dadada" stroke-width="2.0" opacity="0.8"/>
<path d="M70.7 92.5 L70.6 91.0 L71.1 89.5 L72.0 88.4 L72.6 87.0 L73.4 85.7 L74.2 84.5 L75.4 83.6 L76.5 82.6 L78.0 82.2" stroke="#dadada" stroke-width="2.0" opacity="0.8"/>
<path d="M66.4 39.2 L67.2 40.5 L67.9 41.8 L69.3 42.5 L70.6 43.2 L72.1 43.3 L73.6 43.3 L75.1 43.3 L76.6 43.4 L77.9 44.2" stroke="#dadada" stroke-width="2.0" opacity="0.8"/>
<path d="M59.4 69.9 L59.3 68.5 L58.8 67.0 L58.3 65.6 L58.6 64.1 L58.1 62.7 L57.8 61.2 L57.8 59.7 L57.0 58.5 L56.4 57.1" stroke="#dadada" stroke-width="2.0" opacity="0.8"/>
<path d="M76.6 107.9 L75.3 108.6 L73.9 109.3 L72.6 110.0 L71.1 110.1 L69.9 110.9 L68.4 111.3 L67.0 111.6 L65.6 112.1 L64.1 112.0" stroke="#dadada" stroke-width="2.0" opacity="0.8"/>
<path d="M51.3 60.9 L50.0 60.2 L48.5 60.0 L47.0 59.9 L45.5 59.9 L44.0 59.9 L42.6 59.3 L41.1 59.0 L39.9 58.2 L38.5 57.5" stroke="#dadada" stroke-width="2.0" opacity="0.8"/>
<path d="M62.3 40.0 L61.1 39.1 L60.0 38.1 L59.4 36.7 L58.5 35.5 L57.4 34.5 L56.1 33.8 L54.8 33.0 L53.7 31.9 L53.0 30.6" stroke="#dadada" stroke-width="2.0" opacity="0.8"/>
<path d="M92.8 68.2 L94.3 68.3 L95.6 67.5 L96.6 66.4 L98.0 65.8 L99.4 65.4 L100.9 65.3 L102.4 65.7 L103.4 66.8 L104.4 68.0" stroke="#dadada" stroke-width="2.0" opacity="0.8"/>
<path d="M71.3 76.6 L71.0 75.1 L71.0 73.6 L70.5 72.2 L70.3 70.7 L70.0 69.2 L70.1 67.7 L69.6 66.3 L68.6 65.2 L67.1 64.8" stroke="#dadada" stroke-width="2.0" opacity="0.8"/>
<path d="M74.5 50.0 L75.5 48.9 L76.7 48.0 L77.5 46.7 L78.0 45.3 L78.4 43.9 L78.4 42.4 L78.4 40.9 L78.6 39.4 L79.5 38.2" stroke="#dadada" stroke-width="2.0" opacity="0.8"/>
<path d="M26.4 70.5 L27.8 70.1 L29.3 70.4 L30.8 70.8 L31.9 71.8 L33.0 72.7 L34.5 72.9 L36.0 72.9 L37.5 73.0 L38.7 73.8" stroke="#dadada" stroke-width="2.0" opacity="0.8"/>
<path d="M55.0 22.5 L53.7 21.7 L52.2 21.5 L50.9 22.1 L50.1 23.4 L49.1 24.5 L48.6 25.9 L47.5 26.9 L46.9 28.3 L45.8 29.3" stroke="#dadada" stroke-width="2.0" opacity="0.8"/>
<path d="M79.5 37.0 L78.9 35.6 L77.6 34.8 L76.6 33.7 L76.0 32.3 L76.0 30.8 L76.4 29.4 L76.0 27.9 L75.9 26.4 L76.2 24.9" stroke="#dadada" stroke-width="2.0" opacity="0.8"/>
<path d="M58.8 108.0 L58.0 109.3 L56.9 110.3 L56.5 111.7 L57.0 113.2 L57.2 114.6 L56.9 116.1 L57.3 117.5 L58.0 118.9 L58.3 120.3" stroke="#dadada" stroke-width="2.0" opacity="0.8"/>
<path d="M60.9 18.2 L59.8 19.2 L58.8 20.3 L57.5 21.1 L56.8 22.4 L55.6 23.3 L54.6 24.4 L53.4 25.4 L52.1 26.1 L50.9 27.0" stroke="#dadada" stroke-width="2.0" opacity="0.8"/>
<path d="M52.9 93.0 L54.4 93.0 L55.9 93.1 L57.3 92.8 L58.5 91.9 L60.0 91.7 L61.5 91.8 L62.8 92.6 L64.2 93.0 L65.6 93.6" stroke="#dadada" stroke-width="2.0" opacity="0.8"/>
<path d="M70.1 43.8 L68.6 43.8 L67.1 44.0 L65.6 43.8 L64.1 43.5 L63.0 42.6 L62.2 41.2 L61.2 40.2 L59.7 39.9 L58.2 40.0" stroke="#dadada" stroke-width="2.0" opacity="0.8"/>
<path d="M55.8 72.4 L57.0 71.5 L57.4 70.0 L58.4 68.9 L59.8 68.3 L61.3 68.2 L62.8 68.3 L64.2 68.0 L65.7 68.3 L67.0 69.1" stroke="#dadada" stroke-width="2.0" opacity="0.8"/>
<path d="M76.8 106.1 L76.6 107.6 L76.3 109.1 L75.6 110.4 L75.3 111.9 L74.6 113.2 L73.4 114.0 L72.5 115.2 L71.4 116.2 L70.1 117.0" stroke="#dadada" stroke-width="2.0" opacity="0.8"/>
<path d="M59.2 33.3 L58.7 34.7 L57.8 35.9 L56.9 37.1 L56.7 38.6 L56.0 39.9 L54.9 40.9 L54.1 42.2 L53.3 43.4 L51.9 44.1" stroke="#dadada" stroke-width="2.0" opacity="0.8"/>
<path d="M92.8 65.8 L91.3 65.8 L89.9 66.4 L88.9 67.5 L88.3 68.8 L87.4 70.0 L86.7 71.4 L85.9 72.6 L85.2 74.0 L84.6 75.3" stroke="#dadada" stroke-width="2.0" opacity="0.8"/>
<path d="M30.5 77.2 L30.2 75.7 L30.1 74.2 L29.8 72.7 L29.4 71.3 L28.4 70.2 L26.9 69.9 L25.8 68.8 L25.4 67.4 L24.8 66.0" stroke="#dadada" stroke-width="2.0" opacity="0.8"/>
<path d="M67.4 38.9 L67.5 37.5 L68.4 36.2 L69.6 35.4 L71.1 35.0 L72.5 35.5 L74.0 35.5 L75.3 34.8 L76.2 33.6 L76.7 32.2" stroke="#dadada" stroke-width="2.0" opacity="0.8"/>
<path d="M66.6 101.7 L65.1 101.3 L64.1 100.2 L62.6 99.9 L61.2 99.3 L59.7 99.0 L58.3 99.3 L56.9 98.8 L55.4 98.8 L53.9 98.6" stroke="#dadada" stroke-width="2.0" opacity="0.8"/>
<path d="M73.3 110.5 L72.4 109.3 L71.4 108.1 L70.1 107.5 L69.3 106.2 L69.4 104.7 L68.9 103.3 L67.8 102.3 L66.5 101.6 L65.0 101.2" stroke="#dadada" stroke-width="2.0" opacity="0.8"/>
<path d="M84.9 85.1 L84.8 83.6 L84.0 82.4 L82.7 81.6 L81.7 80.4 L81.4 79.0 L81.4 77.5 L81.1 76.0 L80.9 74.5 L81.2 73.1" stroke="#dadada" stroke-width="2.0" opacity="0.8"/>
<path d="M42.6 24.8 L41.3 25.5 L40.2 26.6 L39.8 28.1 L39.0 29.4 L39.1 30.9 L38.8 32.3 L39.1 33.8 L40.0 34.9 L40.4 36.4" stroke="#dadada" stroke-width="2.0" opacity="0.8"/>
<path d="M33.2 58.1 L33.8 59.4 L33.9 60.9 L33.7 62.4 L33.6 63.9 L33.8 65.4 L33.4 66.8 L33.1 68.3 L32.5 69.7 L32.6 71.2" stroke="#dadada" stroke-width="2.0" opacity="0.8"/>
<path d="M79.1 69.0 L79.4 70.5 L80.1 71.8 L81.0 73.0 L82.3 73.8 L83.7 74.2 L84.9 75.2 L86.2 75.9 L87.7 76.0 L89.2 76.1" stroke="#dadada" stroke-width="2.0" opacity="0.8"/>
<path d="M47.4 105.0 L47.9 106.5 L48.9 107.5 L49.4 108.9 L49.6 110.4 L50.3 111.7 L51.1 113.0 L52.1 114.1 L53.4 114.9 L54.9 115.1" stroke="#dadada" stroke-width="2.0" opacity="0.8"/>
<path d="M80.1 42.2 L81.3 41.2 L82.7 40.7 L83.9 40.0 L84.8 38.7 L84.8 37.2 L85.4 35.9 L86.0 34.5 L86.1 33.0 L86.1 31.5" stroke="#dadada" stroke-width="2.0" opacity="0.8"/>
<path d="M67.7 26.2 L67.9 27.7 L67.7 29.2 L68.0 30.7 L69.0 31.8 L70.4 32.3 L71.7 33.0 L73.1 33.7 L74.6 34.0 L76.0 33.7" stroke="#dadada" stroke-width="2.0" opacity="0.8"/>
<path d="M71.0 84.9 L71.7 83.6 L71.9 82.1 L71.3 80.7 L71.1 79.2 L70.8 77.7 L70.9 76.2 L70.2 74.9 L70.0 73.4 L69.5 72.0" stroke="#dadada" stroke-width="2.0" opacity="0.8"/>
<path d="M94.8 61.1 L95.5 59.8 L95.7 58.3 L96.4 57.0 L96.9 55.6 L96.8 54.1 L96.5 52.6 L96.4 51.1 L95.4 49.9 L94.5 48.8" stroke="#dadada" stroke-width="2.0" opacity="0.8"/>
<path d="M57.7 65.1 L58.5 66.4 L58.7 67.9 L58.3 69.3 L58.2 70.8 L57.8 72.2 L57.6 73.7 L56.9 75.1 L57.0 76.6 L56.4 78.0" stroke="#dadada" stroke-width="2.0" opacity="0.8"/>
<path d="M98.3 63.0 L96.8 62.8 L95.4 62.5 L94.0 63.1 L92.5 62.9 L91.0 63.2 L89.8 64.0 L89.0 65.3 L88.6 66.7 L87.8 68.0" stroke="#dadada" stroke-width="2.0" opacity="0.8"/>
<path d="M77.9 32.1 L79.4 32.4 L80.8 32.9 L82.2 33.4 L83.5 34.3 L84.9 34.4 L86.2 35.2 L87.2 36.3 L88.7 36.7 L90.2 36.5" stroke="#dadada" stroke-width="2.0" opacity="0.8"/>
<path d="M61.5 63.6 L61.9 65.0 L62.4 66.4 L63.5 67.4 L64.5 68.6 L64.9 70.0 L65.9 71.2 L66.7 72.4 L67.2 73.8 L68.2 75.0" stroke="#dadada" stroke-width="2.0" opacity="0.8"/>
<path d="M53.1 55.3 L53.9 54.1 L54.6 52.7 L55.9 51.9 L57.3 51.6 L58.7 50.9 L59.8 49.9 L60.7 48.7 L61.5 47.4 L62.8 46.8" stroke="#dadada" stroke-width="2.0" opacity="0.8"/>
<path d="M87.2 99.3 L88.6 99.8 L89.5 101.0 L89.7 102.5 L90.4 103.9 L91.2 105.1 L91.7 106.5 L92.5 107.8 L93.2 109.1 L94.5 109.9" stroke="#dadada" stroke-width="2.0" opacity="0.8"/>
<path d="M56.6 64.0 L58.1 63.5 L59.5 63.9 L60.8 64.8 L61.4 66.1 L61.9 67.6 L61.7 69.1 L61.0 70.3 L59.7 71.1 L59.1 72.5" stroke="#dadada" stroke-width="2.0" opacity="0.8"/>
<path d="M73.3 39.4 L72.3 38.2 L71.4 37.1 L71.2 35.6 L71.1 34.1 L70.7 32.7 L70.2 31.2 L69.7 29.8 L70.0 28.4 L69.8 26.9" stroke="#dadada" stroke-width="2.0" opacity="0.8"/>
<path d="M46.4 78.7 L47.4 79.8 L47.6 81.3 L47.8 82.8 L48.4 84.2 L49.1 85.5 L49.7 86.9 L50.8 87.9 L52.3 88.3 L53.7 88.1" stroke="#dadada" stroke-width="2.0" opacity="0.8"/>
<path d="M45.5 53.9 L45.6 55.4 L46.4 56.6 L47.1 58.0 L47.3 59.4 L47.2 60.9 L47.0 62.4 L46.6 63.9 L46.7 65.4 L46.4 66.8" stroke="#dadada" stroke-width="2.0" opacity="0.8"/>
<path d="M58.9 68.4 L57.7 67.5 L56.3 66.9 L54.9 66.7 L53.4 67.0 L51.9 67.2 L50.5 67.7 L49.0 68.0 L48.0 69.1 L47.2 70.4" stroke="#dadada" stroke-width="2.0" opacity="0.8"/>
<path d="M90.9 36.6 L89.5 36.1 L88.0 35.9 L86.9 35.0 L85.5 34.4 L84.4 33.3 L83.0 32.8 L81.5 33.1 L80.1 32.7 L78.6 32.4" stroke="#dadada" stroke-width="2.0" opacity="0.8"/>
<path d="M27.0 52.0 L25.5 52.1 L24.2 52.9 L23.3 54.1 L21.8 54.6 L20.4 54.7 L19.0 55.3 L17.8 56.3 L16.8 57.4 L15.6 58.3" stroke="#dadada" stroke-width="2.0" opacity="0.8"/>
<path d="M71.3 99.5 L72.0 98.2 L73.0 97.1 L74.3 96.4 L75.8 96.1 L77.2 95.7 L78.7 95.8 L80.1 96.4 L81.1 97.5 L82.5 98.1" stroke="#dadada" stroke-width="2.0" opacity="0.8"/>
<path d="M83.3 72.3 L82.0 71.6 L80.8 70.7 L79.5 69.9 L78.5 68.8 L78.1 67.3 L77.9 65.8 L77.5 64.4 L77.1 63.0 L76.5 61.6" stroke="#dadada" stroke-width="2.0" opacity="0.8"/>
<path d="M79.8 42.2 L78.6 43.0 L77.5 44.1 L76.7 45.3 L75.5 46.2 L74.0 46.5 L72.5 46.8 L71.1 47.2 L69.9 48.1 L69.0 49.3" stroke="#dadada" stroke-width="2.0" opacity="0.8"/>
<path d="M33.6 71.3 L32.1 71.2 L30.8 70.5 L29.4 70.0 L28.2 69.0 L27.6 67.7 L27.8 66.2 L27.4 64.7 L26.9 63.3 L27.1 61.8" stroke="#dadada" stroke-width="2.0" opacity="0.8"/>
<path d="M67.2 63.2 L68.7 63.0 L70.2 62.8 L71.5 63.5 L72.8 64.2 L74.1 64.9 L75.2 65.9 L76.5 66.8 L77.8 67.4 L79.1 68.2" stroke="#dadada" stroke-width="2.0" opacity="0.8"/>
<path d="M50.1 109.6 L49.5 108.3 L48.3 107.4 L47.0 106.6 L45.6 106.1 L44.2 105.4 L43.0 104.6 L42.2 103.3 L42.1 101.8 L42.1 100.3" stroke="#dadada" stroke-width="2.0" opacity="0.8"/>
<path d="M57.2 76.3 L58.7 76.0 L60.2 75.8 L61.6 76.1 L63.1 75.8 L64.5 75.2 L66.0 75.4 L67.2 76.2 L68.5 77.0 L70.0 77.2" stroke="#dadada" stroke-width="2.0" opacity="0.8"/>
<path d="M93.6 83.1 L94.8 82.3 L96.3 82.2 L97.8 81.9 L99.1 81.1 L100.1 80.0 L101.1 78.9 L102.1 77.8 L102.7 76.4 L102.7 74.9" stroke="#dadada" stroke-width="2.0" opacity="0.8"/>
<path d="M72.4 74.1 L71.0 74.6 L69.5 74.9 L68.4 75.8 L67.4 76.9 L66.0 77.6 L64.9 78.6 L63.6 79.3 L62.8 80.6 L62.5 82.1" stroke="#dadada" stroke-width="2.0" opacity="0.8"/>
<path d="M89.4 72.4 L88.2 71.4 L87.1 70.5 L86.0 69.4 L84.6 68.8 L83.4 67.9 L82.3 66.9 L81.9 65.5 L81.6 64.0 L81.1 62.6" stroke="#dadada" stroke-width="2.0" opacity="0.8"/>
<path d="M82.8 23.0 L84.2 23.3 L85.7 23.7 L86.9 24.6 L87.9 25.7 L88.5 27.1 L89.8 27.9 L91.3 28.0 L92.7 28.5 L94.1 28.8" stroke="#dadada" stroke-width="2.0" opacity="0.8"/>
<path d="M79.2 48.4 L80.3 49.5 L81.7 50.0 L82.8 51.0 L83.7 52.2 L84.9 53.2 L86.1 54.1 L87.4 54.8 L88.9 54.7 L90.2 55.4" stroke="#dadada" stroke-width="2.0" opacity="0.8"/>
<path d="M68.6 110.8 L67.2 111.2 L65.9 112.0 L65.2 113.3 L63.9 114.1 L62.4 114.3 L61.0 114.8 L59.5 114.7 L58.2 113.9 L56.7 113.6" stroke="#dadada" stroke-width="2.0" opacity="0.8"/>
<path d="M70.2 110.9 L68.9 110.1 L67.4 109.8 L65.9 109.7 L64.5 109.2 L63.0 109.3 L61.6 109.6 L60.1 109.3 L58.6 109.0 L57.3 108.2" stroke="#dadada" stroke-width="2.0" opacity="0.8"/>
<path d="M41.5 29.9 L41.0 31.3 L39.9 32.3 L39.0 33.5 L38.0 34.6 L37.7 36.1 L37.3 37.5 L37.1 39.0 L37.1 40.5 L37.8 41.8" stroke="#dadada" stroke-width="2.0" opacity="0.8"/>
<path d="M50.1 37.2 L51.0 38.4 L52.2 39.3 L53.7 39.4 L55.1 39.8 L56.6 39.9 L58.1 39.4 L59.5 39.3 L60.8 38.5 L61.8 37.3" stroke="#dadada" stroke-width="2.0" opacity="0.8"/>
<path d="M57.5 98.1 L57.4 96.6 L57.0 95.2 L57.1 93.7 L56.9 92.2 L57.5 90.8 L57.6 89.3 L58.5 88.1 L59.4 86.9 L59.8 85.5" stroke="#dadada" stroke-width="2.0" opacity="0.8"/>
<path d="M58.2 25.5 L57.4 24.2 L57.3 22.7 L57.3 21.2 L57.1 19.7 L56.5 18.4 L56.0 16.9 L55.1 15.8 L54.8 14.3 L53.9 13.1" stroke="#dadada" stroke-width="2.0" opacity="0.8"/>
<path d="M63.0 67.9 L62.4 69.2 L61.9 70.7 L61.2 72.0 L60.4 73.2 L59.8 74.6 L59.5 76.1 L59.9 77.5 L60.8 78.7 L61.2 80.2" stroke="#dadada" stroke-width="2.0" opacity="0.8"/>
<path d="M47.7 80.3 L48.8 81.3 L50.0 82.1 L51.3 83.0 L52.7 83.5 L54.1 83.2 L55.5 82.6 L56.7 81.7 L57.2 80.3 L58.1 79.1" stroke="#dadada" stroke-width="2.0" opacity="0.8"/>
<path d="M44.6 53.5 L46.0 53.2 L47.5 53.5 L48.7 54.4 L50.2 54.7 L51.7 54.6 L52.9 53.8 L54.3 53.2 L55.7 52.9 L57.1 52.3" stroke="#dadada" stroke-width="2.0" opacity="0.8"/>
<path d="M55.0 79.9 L54.1 78.7 L53.8 77.2 L53.3 75.8 L52.9 74.3 L52.1 73.1 L50.8 72.4 L49.9 71.1 L49.5 69.7 L49.4 68.2" stroke="#dadada" stroke-width="2.0" opacity="0.8"/>
<path d="M35.0 32.4 L34.7 33.9 L35.2 35.3 L36.0 36.5 L36.7 37.9 L37.7 38.9 L38.3 40.3 L38.8 41.7 L38.9 43.2 L39.4 44.6" stroke="#dadada" stroke-width="2.0" opacity="0.8"/>
<path d="M56.8 82.5 L56.8 84.0 L56.1 85.4 L55.1 86.4 L54.4 87.8 L54.5 89.3 L53.9 90.7 L53.2 92.0 L53.2 93.5 L53.8 94.9" stroke="#dadada" stroke-width="2.0" opacity="0.8"/>
<path d="M82.0 20.9 L81.3 19.5 L81.0 18.1 L81.3 16.6 L81.3 15.1 L80.5 13.8 L80.5 12.3 L80.3 10.8 L81.0 9.4 L81.9 8.3" stroke="#dadada" stroke-width="2.0" opacity="0.8"/>
<path d="M81.1 97.5 L80.0 96.5 L78.5 96.2 L77.2 95.5 L75.8 95.0 L74.4 94.4 L73.4 93.2 L72.1 92.6 L71.0 91.6 L69.5 91.2" stroke="#dadada" stroke-width="2.0" opacity="0.8"/>
<path d="M78.2 95.0 L78.0 96.5 L77.1 97.6 L75.9 98.6 L74.8 99.5 L73.9 100.8 L73.8 102.3 L73.9 103.8 L74.2 105.2 L75.0 106.5" stroke="#dadada" stroke-width="2.0" opacity="0.8"/>
<path d="M46.8 26.1 L46.7 24.6 L46.2 23.2 L45.2 22.0 L44.3 20.8 L43.3 19.7 L43.0 18.3 L42.4 16.9 L41.5 15.7 L41.2 14.2" stroke="#dadada" stroke-width="2.0" opacity="0.8"/>
<path d="M33.4 70.0 L32.2 70.9 L30.9 71.8 L29.5 72.2 L28.4 73.2 L27.0 73.9 L25.6 74.5 L24.3 75.1 L22.8 75.2 L21.3 74.8" stroke="#dadada" stroke-width="2.0" opacity="0.8"/>
<path d="M31.2 41.8 L30.7 43.2 L30.9 44.7 L31.6 46.0 L32.7 47.1 L33.5 48.3 L34.4 49.5 L35.7 50.2 L37.2 50.6 L38.6 51.0" stroke="#dadada" stroke-width="2.0" opacity="0.8"/>
<path d="M51.0 29.3 L52.5 29.1 L53.9 29.8 L55.0 30.8 L56.4 31.2 L57.7 31.9 L58.4 33.3 L59.0 34.6 L60.1 35.6 L61.3 36.5" stroke="#dadada" stroke-width="2.0" opacity="0.8"/>
<path d="M56.7 31.6 L55.3 32.0 L53.8 31.7 L52.4 31.2 L51.1 30.5 L50.4 29.2 L49.8 27.8 L48.9 26.6 L47.7 25.7 L46.2 25.5" stroke="#dadada" stroke-width="2.0" opacity="0.8"/>
<path d="M89.2 42.5 L89.5 44.0 L89.3 45.5 L88.3 46.6 L87.9 48.0 L87.0 49.3 L85.7 50.0 L84.2 50.4 L82.9 51.1 L81.9 52.2" stroke="#dadada" stroke-width="2.0" opacity="0.8"/>
<path d="M88.0 45.0 L86.9 46.0 L86.0 47.2 L84.7 48.0 L83.7 49.1 L83.5 50.5 L83.1 52.0 L82.5 53.4 L81.4 54.4 L80.1 55.2" stroke="#dadada" stroke-width="2.0" opacity="0.8"/>
<path d="M61.6 63.5 L62.6 64.5 L63.6 65.6 L65.1 66.1 L66.3 66.9 L67.8 67.2 L69.3 67.3 L70.5 68.2 L72.0 68.5 L73.3 67.9" stroke="#dadada" stroke-width="2.0" opacity="0.8"/>
<path d="M57.2 31.7 L56.1 30.6 L55.6 29.2 L55.7 27.7 L56.3 26.3 L56.8 24.9 L56.9 23.4 L57.3 21.9 L57.7 20.5 L57.9 19.0" stroke="#dadada" stroke-width="2.0" opacity="0.8"/>
<path d="M49.1 57.2 L48.9 55.7 L49.4 54.3 L49.3 52.8 L48.9 51.4 L48.3 50.0 L47.9 48.5 L47.2 47.2 L46.1 46.2 L44.7 45.8" stroke="#dadada" stroke-width="2.0" opacity="0.8"/>
<path d="M47.9 59.4 L49.3 59.9 L50.4 60.9 L50.8 62.4 L50.4 63.8 L49.7 65.1 L48.6 66.2 L48.2 67.6 L47.5 68.9 L46.6 70.1" stroke="#dadada" stroke-width="2.0" opacity="0.8"/>
<path d="M45.8 70.8 L47.2 70.4 L48.7 70.1 L50.1 69.6 L51.3 68.8 L52.8 68.6 L54.0 67.7 L54.7 66.4 L55.7 65.3 L56.7 64.1" stroke="#dadada" stroke-width="2.0" opacity="0.8"/>
<path d="M28.8 80.0 L27.7 81.0 L26.6 82.1 L25.6 83.1 L24.4 84.1 L23.4 85.2 L23.0 86.6 L23.1 88.1 L22.5 89.5 L21.9 90.9" stroke="#dadada" stroke-width="2.0" opacity="0.8"/>
<path d="M42.3 21.8 L40.8 21.9 L39.3 22.1 L37.8 22.2 L36.4 22.8 L35.0 23.2 L33.9 24.2 L32.8 25.2 L31.6 26.1 L30.9 27.5" stroke="#dadada" stroke-width="2.0" opacity="0.8"/>
<path d="M54.6 19.6 L53.1 19.5 L51.7 19.3 L50.3 18.8 L49.1 17.8 L47.6 17.5 L46.6 16.4 L45.9 15.1 L44.6 14.2 L43.8 13.0" stroke="#dadada" stroke-width="2.0" opacity="0.8"/>
<path d="M53.4 29.6 L54.8 29.4 L56.3 29.6 L57.8 29.2 L59.3 29.3 L60.6 28.6 L61.6 27.5 L62.5 26.3 L62.6 24.8 L62.8 23.3" stroke="#dadada" stroke-width="2.0" opacity="0.8"/>
<path d="M39.1 42.9 L38.5 41.5 L38.7 40.0 L39.1 38.5 L40.0 37.4 L41.1 36.3 L42.5 35.9 L44.0 36.1 L45.5 35.8 L47.0 35.8" stroke="#dadada" stroke-width="2.0" opacity="0.8"/>
<path d="M49.3 90.7 L49.2 89.2 L48.5 87.8 L47.6 86.6 L47.1 85.2 L47.3 83.8 L48.0 82.4 L47.8 80.9 L47.8 79.4 L47.2 78.1" stroke="#dadada" stroke-width="2.0" opacity="0.8"/>
<path d="M65.9 94.7 L66.4 96.1 L66.6 97.6 L67.3 99.0 L68.3 100.0 L69.5 101.0 L70.2 102.3 L70.7 103.7 L71.8 104.7 L73.3 105.0" stroke="#dadada" stroke-width="2.0" opacity="0.8"/>
<path d="M36.8 69.1 L36.1 70.4 L35.6 71.8 L35.8 73.3 L35.3 74.7 L34.7 76.1 L33.8 77.3 L32.5 78.1 L31.0 78.2 L29.8 79.1" stroke="#dadada" stroke-width="2.0" opacity="0.8"/>
<path d="M49.4 27.5 L48.0 26.9 L47.0 25.8 L45.6 25.4 L44.1 25.6 L42.6 25.2 L41.3 24.5 L39.9 24.0 L38.5 23.5 L37.0 23.6" stroke="#dadada" stroke-width="2.0" opacity="0.8"/>
<path d="M89.6 52.5 L90.8 51.6 L91.4 50.2 L91.7 48.7 L91.4 47.3 L91.9 45.8 L92.5 44.5 L92.4 43.0 L91.6 41.7 L90.7 40.5" stroke="#dadada" stroke-width="2.0" opacity="0.8"/>
<path d="M59.4 71.4 L58.5 72.6 L58.3 74.1 L58.0 75.6 L58.0 77.1 L58.9 78.3 L59.7 79.5 L59.8 81.0 L60.7 82.3 L61.9 83.1" stroke="#dadada" stroke-width="2.0" opacity="0.8"/>
<path d="M75.7 40.1 L75.5 41.6 L75.7 43.1 L75.8 44.6 L75.8 46.1 L75.0 47.3 L73.7 48.0 L72.9 49.3 L72.0 50.5 L70.8 51.4" stroke="#dadada" stroke-width="2.0" opacity="0.8"/>
<path d="M91.8 91.8 L91.0 90.5 L90.0 89.4 L88.7 88.6 L87.8 87.4 L87.5 85.9 L88.0 84.5 L88.8 83.2 L89.2 81.8 L90.1 80.6" stroke="#dadada" stroke-width="2.0" opacity="0.8"/>
<path d="M81.2 64.4 L80.0 63.5 L78.9 62.5 L77.6 61.6 L76.2 61.5 L74.7 61.6 L73.2 62.1 L71.8 61.7 L70.3 61.3 L68.8 61.2" stroke="#dadada" stroke-width="2.0" opacity="0.8"/>
<path d="M41.5 36.2 L41.2 37.7 L41.8 39.0 L41.7 40.5 L41.8 42.0 L41.9 43.5 L41.9 45.0 L42.2 46.5 L43.1 47.7 L44.5 48.3" stroke="#dadada" stroke-width="2.0" opacity="0.8"/>
<path d="M46.1 43.8 L46.0 42.3 L46.6 40.9 L47.0 39.5 L48.0 38.4 L49.2 37.4 L49.7 36.0 L49.6 34.5 L49.7 33.0 L50.6 31.8" stroke="#dadada" stroke-width="2.0" opacity="0.8"/>
<path d="M50.6 91.8 L49.1 91.8 L47.8 92.5 L46.5 93.3 L45.0 93.4 L43.6 93.9 L42.4 94.8 L41.8 96.2 L41.9 97.7 L42.3 99.1" stroke="#dadada" stroke-width="2.0" opacity="0.8"/>
<path d="M78.4 34.5 L77.5 35.7 L76.6 36.9 L75.2 37.5 L73.7 37.9 L72.5 38.8 L71.1 39.2 L69.6 38.9 L68.2 38.4 L66.7 38.7" stroke="#dadada" stroke-width="2.0" opacity="0.8"/>
<path d="M49.3 26.1 L49.8 27.5 L49.6 29.0 L49.2 30.4 L48.2 31.5 L47.5 32.8 L47.2 34.3 L46.4 35.6 L45.5 36.7 L44.6 38.0" stroke="#dadada" stroke-width="2.0" opacity="0.8"/>
<path d="M76.3 46.8 L77.8 47.2 L79.2 46.7 L80.7 46.5 L82.1 46.1 L83.5 45.6 L85.0 45.2 L86.3 44.5 L87.6 43.7 L88.2 42.3" stroke="#dadada" stroke-width="2.0" opacity="0.8"/>
<path d="M96.0 70.1 L97.3 69.2 L98.6 68.6 L100.1 68.3 L101.4 67.7 L102.4 66.5 L102.7 65.0 L102.5 63.6 L102.7 62.1 L102.2 60.7" stroke="#dadada" stroke-width="2.0" opacity="0.8"/>
<path d="M87.1 55.6 L85.7 55.1 L84.3 54.5 L83.1 53.6 L82.0 52.6 L80.7 51.9 L79.7 50.8 L78.4 50.0 L77.3 49.0 L76.6 47.7" stroke="#dadada" stroke-width="2.0" opacity="0.8"/>
<path d="M84.1 43.9 L85.1 42.7 L86.0 41.5 L86.6 40.1 L87.2 38.8 L88.4 37.9 L89.1 36.6 L89.0 35.1 L88.8 33.6 L88.9 32.1" stroke="#dadada" stroke-width="2.0" opacity="0.8"/>
<path d="M83.9 49.3 L85.3 48.8 L86.8 48.6 L88.1 47.8 L88.7 46.5 L88.7 45.0 L87.9 43.7 L87.1 42.4 L86.5 41.0 L85.3 40.1" stroke="#dadada" stroke-width="2.0" opacity="0.8"/>
<path d="M84.2 37.0 L85.7 36.8 L87.2 36.9 L88.7 36.7 L90.2 37.0 L91.7 37.3 L93.2 37.2 L94.5 37.9 L96.0 37.9 L97.5 38.2" stroke="#dadada" stroke-width="2.0" opacity="0.8"/>
<path d="M27.2 78.5 L25.8 78.8 L24.6 79.7 L23.4 80.6 L22.3 81.6 L20.8 82.0 L19.4 81.5 L18.1 80.9 L16.6 80.7 L15.1 81.0" stroke="#dadada" stroke-width="2.0" opacity="0.8"/>
<path d="M43.0 56.7 L43.7 58.0 L43.9 59.5 L43.9 61.0 L44.2 62.5 L43.7 63.9 L43.7 65.4 L43.5 66.9 L44.0 68.3 L43.8 69.8" stroke="#dadada" stroke-width="2.0" opacity="0.8"/>
<path d="M91.5 39.5 L92.1 38.1 L92.3 36.7 L92.2 35.2 L92.1 33.7 L92.7 32.3 L92.6 30.8 L92.9 29.3 L93.4 27.9 L93.8 26.4" stroke="#dadada" stroke-width="2.0" opacity="0.8"/>
<path d="M68.3 102.9 L68.0 104.4 L68.0 105.9 L67.4 107.3 L66.3 108.3 L65.7 109.7 L64.6 110.7 L63.1 110.8 L61.7 111.3 L60.8 112.5" stroke="#dadada" stroke-width="2.0" opacity="0.8"/>
<path d="M34.1 87.8 L35.5 88.1 L36.9 88.8 L38.4 88.7 L39.8 88.3 L41.3 88.7 L42.6 89.4 L43.4 90.7 L43.5 92.2 L44.3 93.4" stroke="#dadada" stroke-width="2.0" opacity="0.8"/>
<path d="M40.8 93.6 L39.6 92.7 L38.4 91.8 L36.9 91.3 L35.5 91.0 L34.0 91.3 L33.0 92.4 L31.5 92.8 L30.2 93.4 L28.7 93.4" stroke="#dadada" stroke-width="2.0" opacity="0.8"/>
<path d="M31.6 62.2 L32.7 63.3 L34.0 63.9 L35.2 64.8 L36.7 65.3 L38.0 66.0 L39.3 66.8" stroke="#3a3a3a" stroke-width="0.9" opacity="0.5"/>
<path d="M31.0 48.4 L29.6 47.8 L28.1 47.5 L26.7 47.5 L25.3 46.9 L24.3 45.8 L23.5 44.5" stroke="#3a3a3a" stroke-width="0.9" opacity="0.5"/>
<path d="M43.8 30.3 L44.3 31.7 L45.4 32.7 L46.5 33.8 L47.6 34.7 L48.7 35.8 L50.0 36.6" stroke="#3a3a3a" stroke-width="0.9" opacity="0.5"/>
<path d="M74.2 68.0 L72.9 67.3 L72.1 66.1 L71.8 64.6 L71.8 63.1 L71.6 61.6 L71.2 60.2" stroke="#3a3a3a" stroke-width="0.9" opacity="0.5"/>
<path d="M55.5 112.2 L54.5 113.3 L53.6 114.5 L53.2 115.9 L52.1 117.0 L51.6 118.4 L51.0 119.8" stroke="#3a3a3a" stroke-width="0.9" opacity="0.5"/>
<path d="M70.9 50.8 L71.4 52.2 L72.4 53.3 L73.0 54.7 L73.2 56.2 L72.7 57.6 L73.0 59.1" stroke="#3a3a3a" stroke-width="0.9" opacity="0.5"/>
<path d="M77.5 45.4 L76.7 44.2 L75.6 43.1 L75.2 41.7 L74.1 40.7 L73.3 39.4 L72.9 37.9" stroke="#3a3a3a" stroke-width="0.9" opacity="0.5"/>
<path d="M62.8 73.0 L64.2 72.6 L65.7 72.3 L67.2 72.4 L68.7 72.4 L70.2 72.6 L71.7 72.7" stroke="#3a3a3a" stroke-width="0.9" opacity="0.5"/>
<path d="M64.1 75.1 L63.2 73.9 L62.5 72.6 L61.8 71.3 L60.8 70.2 L59.9 68.9 L58.8 68.0" stroke="#3a3a3a" stroke-width="0.9" opacity="0.5"/>
<path d="M94.7 60.7 L94.5 59.3 L94.2 57.8 L93.5 56.4 L92.4 55.4 L91.9 54.0 L91.3 52.6" stroke="#3a3a3a" stroke-width="0.9" opacity="0.5"/>
<path d="M63.9 66.3 L64.1 64.8 L63.8 63.4 L64.0 61.9 L64.2 60.4 L64.5 58.9 L65.3 57.7" stroke="#3a3a3a" stroke-width="0.9" opacity="0.5"/>
<path d="M88.6 96.2 L89.9 96.9 L91.4 97.1 L92.9 96.8 L94.3 96.3 L95.8 96.2 L97.3 96.1" stroke="#3a3a3a" stroke-width="0.9" opacity="0.5"/>
<path d="M58.2 21.1 L56.7 21.3 L55.2 21.2 L53.7 21.3 L52.2 21.3 L50.8 20.9 L49.5 20.2" stroke="#3a3a3a" stroke-width="0.9" opacity="0.5"/>
<path d="M34.0 82.1 L33.0 83.2 L32.3 84.5 L31.7 85.9 L31.4 87.3 L31.3 88.8 L31.9 90.2" stroke="#3a3a3a" stroke-width="0.9" opacity="0.5"/>
<path d="M38.1 70.8 L39.6 70.8 L41.0 71.2 L42.5 71.3 L44.0 71.1 L45.4 70.5 L46.9 70.4" stroke="#3a3a3a" stroke-width="0.9" opacity="0.5"/>
<path d="M29.3 77.5 L29.9 76.1 L30.3 74.7 L31.2 73.5 L32.2 72.3 L33.0 71.1 L33.2 69.6" stroke="#3a3a3a" stroke-width="0.9" opacity="0.5"/>
<path d="M57.4 49.8 L56.8 48.5 L56.0 47.2 L55.4 45.8 L55.3 44.3 L55.0 42.8 L54.5 41.4" stroke="#3a3a3a" stroke-width="0.9" opacity="0.5"/>
<path d="M68.3 107.3 L68.1 108.7 L67.7 110.2 L67.4 111.6 L66.9 113.1 L66.6 114.5 L67.0 116.0" stroke="#3a3a3a" stroke-width="0.9" opacity="0.5"/>
<path d="M82.5 51.1 L81.0 50.8 L79.7 50.0 L78.7 49.0 L77.3 48.4 L75.9 47.8 L74.5 47.2" stroke="#3a3a3a" stroke-width="0.9" opacity="0.5"/>
<path d="M59.0 98.5 L57.7 99.3 L56.2 99.5 L54.8 99.9 L53.3 100.2 L51.8 100.6 L50.4 100.4" stroke="#3a3a3a" stroke-width="0.9" opacity="0.5"/>
<path d="M75.6 88.3 L74.9 89.6 L74.0 90.8 L73.0 91.9 L71.7 92.7 L70.3 93.1 L69.1 94.1" stroke="#3a3a3a" stroke-width="0.9" opacity="0.5"/>
<path d="M67.2 17.7 L66.8 16.2 L66.5 14.7 L65.5 13.6 L64.8 12.3 L64.0 11.0 L63.3 9.7" stroke="#3a3a3a" stroke-width="0.9" opacity="0.5"/>
<path d="M48.7 65.4 L50.0 66.1 L51.5 66.6 L53.0 66.7 L54.5 66.5 L55.9 65.9 L57.4 65.9" stroke="#3a3a3a" stroke-width="0.9" opacity="0.5"/>
<path d="M66.5 64.6 L65.6 65.9 L65.0 67.2 L63.9 68.3 L62.6 69.0 L61.1 69.1 L59.7 69.7" stroke="#3a3a3a" stroke-width="0.9" opacity="0.5"/>
<path d="M64.9 50.5 L63.5 50.9 L62.0 51.1 L60.6 51.5 L59.1 51.5 L57.6 51.9 L56.1 51.7" stroke="#3a3a3a" stroke-width="0.9" opacity="0.5"/>
<path d="M66.5 17.3 L65.9 18.6 L65.3 20.0 L64.7 21.4 L64.4 22.9 L64.4 24.4 L63.9 25.8" stroke="#3a3a3a" stroke-width="0.9" opacity="0.5"/>
<path d="M45.3 85.2 L45.9 83.8 L46.5 82.4 L47.6 81.4 L48.6 80.3 L50.0 79.7 L50.9 78.5" stroke="#3a3a3a" stroke-width="0.9" opacity="0.5"/>
<path d="M56.7 77.8 L57.9 78.8 L59.3 79.1 L60.7 79.6 L62.2 79.7 L63.6 80.3 L64.9 81.0" stroke="#3a3a3a" stroke-width="0.9" opacity="0.5"/>
<path d="M86.1 63.3 L85.6 61.9 L84.9 60.6 L83.8 59.5 L83.1 58.2 L82.0 57.2 L81.5 55.8" stroke="#3a3a3a" stroke-width="0.9" opacity="0.5"/>
<path d="M98.1 54.7 L97.0 53.7 L96.4 52.3 L96.0 50.8 L95.2 49.6 L94.0 48.8 L92.9 47.8" stroke="#3a3a3a" stroke-width="0.9" opacity="0.5"/>
<path d="M45.5 36.0 L44.1 35.5 L42.7 34.9 L41.2 34.8 L39.8 34.2 L38.4 33.7 L37.2 32.9" stroke="#3a3a3a" stroke-width="0.9" opacity="0.5"/>
<path d="M34.2 94.3 L35.6 94.0 L36.8 93.0 L37.8 91.9 L38.9 91.0 L39.8 89.8 L40.7 88.6" stroke="#3a3a3a" stroke-width="0.9" opacity="0.5"/>
<path d="M29.5 59.8 L29.2 58.4 L29.1 56.9 L28.5 55.5 L28.4 54.0 L27.7 52.7 L27.7 51.2" stroke="#3a3a3a" stroke-width="0.9" opacity="0.5"/>
<path d="M64.1 41.9 L63.0 42.9 L61.8 43.9 L60.4 44.3 L59.2 45.3 L58.1 46.2 L56.7 46.7" stroke="#3a3a3a" stroke-width="0.9" opacity="0.5"/>
<path d="M69.8 67.7 L71.3 68.0 L72.8 67.9 L74.2 68.5 L75.3 69.4 L76.7 70.1 L77.7 71.2" stroke="#3a3a3a" stroke-width="0.9" opacity="0.5"/>
<path d="M97.6 79.6 L99.0 79.8 L100.5 80.0 L102.0 79.8 L103.5 79.9 L105.0 79.5 L106.5 79.6" stroke="#3a3a3a" stroke-width="0.9" opacity="0.5"/>
<path d="M45.9 19.2 L44.4 19.2 L42.9 19.2 L41.4 18.7 L40.0 18.1 L38.6 17.6 L37.2 17.7" stroke="#3a3a3a" stroke-width="0.9" opacity="0.5"/>
<path d="M63.1 22.0 L61.8 21.2 L60.6 20.3 L59.3 19.6 L57.9 19.1 L56.6 18.4 L55.1 18.1" stroke="#3a3a3a" stroke-width="0.9" opacity="0.5"/>
<path d="M48.5 98.8 L49.6 97.7 L50.2 96.3 L50.1 94.8 L50.7 93.4 L50.7 91.9 L50.7 90.4" stroke="#3a3a3a" stroke-width="0.9" opacity="0.5"/>
<path d="M64.9 24.1 L63.6 24.9 L62.3 25.6 L61.0 26.3 L59.7 27.2 L58.8 28.4 L58.1 29.7" stroke="#3a3a3a" stroke-width="0.9" opacity="0.5"/>
<path d="M38.3 25.1 L37.8 26.5 L37.4 28.0 L36.4 29.1 L36.1 30.6 L35.2 31.7 L34.3 32.9" stroke="#3a3a3a" stroke-width="0.9" opacity="0.5"/>
<path d="M85.3 70.8 L84.4 69.6 L83.8 68.2 L82.8 67.1 L81.5 66.3 L80.0 66.1 L78.5 66.1" stroke="#3a3a3a" stroke-width="0.9" opacity="0.5"/>
<path d="M63.4 42.1 L64.1 40.7 L64.9 39.5 L65.3 38.0 L65.9 36.6 L66.8 35.4 L67.9 34.5" stroke="#3a3a3a" stroke-width="0.9" opacity="0.5"/>
<path d="M77.3 95.9 L76.2 96.9 L75.1 97.8 L73.6 98.3 L72.6 99.3 L71.2 99.9 L69.8 100.5" stroke="#3a3a3a" stroke-width="0.9" opacity="0.5"/>
<path d="M54.6 21.1 L54.3 22.5 L53.7 23.9 L53.7 25.4 L53.9 26.9 L54.5 28.2 L55.6 29.3" stroke="#3a3a3a" stroke-width="0.9" opacity="0.5"/>
<path d="M39.6 46.1 L41.0 46.6 L42.2 47.5 L43.4 48.4 L44.6 49.2 L45.6 50.4 L46.0 51.9" stroke="#3a3a3a" stroke-width="0.9" opacity="0.5"/>
<path d="M82.1 77.5 L82.4 79.0 L82.2 80.5 L81.5 81.9 L81.5 83.4 L81.1 84.8 L81.0 86.3" stroke="#3a3a3a" stroke-width="0.9" opacity="0.5"/>
<path d="M75.8 88.8 L76.4 90.2 L76.3 91.7 L75.7 93.0 L74.7 94.2 L73.4 95.0 L72.0 95.3" stroke="#3a3a3a" stroke-width="0.9" opacity="0.5"/>
<path d="M69.2 56.8 L70.3 55.7 L71.6 55.1 L72.8 54.2 L74.3 53.9 L75.8 53.7 L77.2 54.1" stroke="#3a3a3a" stroke-width="0.9" opacity="0.5"/>
<path d="M85.0 38.0 L85.4 36.5 L85.4 35.0 L85.3 33.5 L84.8 32.1 L84.4 30.7 L84.5 29.2" stroke="#3a3a3a" stroke-width="0.9" opacity="0.5"/>
<path d="M76.8 85.2 L75.4 85.7 L73.9 85.9 L72.5 85.8 L71.2 85.0 L70.2 83.9 L69.1 82.9" stroke="#3a3a3a" stroke-width="0.9" opacity="0.5"/>
<path d="M29.0 79.2 L29.5 77.8 L30.2 76.5 L31.3 75.4 L32.6 74.8 L33.5 73.5 L34.3 72.3" stroke="#3a3a3a" stroke-width="0.9" opacity="0.5"/>
<path d="M87.0 55.1 L85.8 54.3 L84.4 53.6 L82.9 53.4 L81.4 53.3 L80.0 52.8 L78.7 52.1" stroke="#3a3a3a" stroke-width="0.9" opacity="0.5"/>
<path d="M45.4 21.1 L44.9 22.5 L44.5 23.9 L43.8 25.3 L42.8 26.4 L42.3 27.8 L41.5 29.1" stroke="#3a3a3a" stroke-width="0.9" opacity="0.5"/>
<path d="M36.7 40.0 L38.1 39.4 L39.3 38.4 L40.7 38.0 L42.2 37.7 L43.7 38.1 L45.1 38.2" stroke="#3a3a3a" stroke-width="0.9" opacity="0.5"/>
<path d="M62.0 110.4 L60.7 109.7 L59.2 109.4 L57.9 108.6 L56.5 108.3 L55.0 107.9 L53.6 108.3" stroke="#3a3a3a" stroke-width="0.9" opacity="0.5"/>
<path d="M58.4 95.4 L58.6 96.9 L59.4 98.1 L60.1 99.5 L60.2 100.9 L60.4 102.4 L60.8 103.9" stroke="#3a3a3a" stroke-width="0.9" opacity="0.5"/>
<path d="M75.3 19.8 L74.2 18.8 L73.6 17.4 L72.9 16.1 L72.3 14.7 L72.0 13.3 L71.4 11.9" stroke="#3a3a3a" stroke-width="0.9" opacity="0.5"/>
<path d="M63.8 81.7 L65.0 80.9 L66.2 79.9 L67.6 79.5 L68.8 78.5 L70.2 78.0 L71.7 77.8" stroke="#3a3a3a" stroke-width="0.9" opacity="0.5"/>
<path d="M66.6 58.1 L67.2 56.7 L68.1 55.5 L69.2 54.6 L69.8 53.2 L70.2 51.7 L70.0 50.2" stroke="#3a3a3a" stroke-width="0.9" opacity="0.5"/>
</g>
<path d="M62 14 C53 13 45 14 39 19 C33 24 31 32 31 40 C31 43 32 45 31 47 C27 52 25 58 24.5 67 C24 76 25 84 28 92 C31 100 37 107 44 111 C50 114 58 113.5 61.5 110.5 C65 113.5 73 114 80 111 C87 107 93 100 96 92 C99 84 100 76 99.5 67 C99 58 97 52 93 47 C92 45 93 43 93 40 C93 32 91 24 85 19 C79 14 71 13 62 14 Z" fill="none" stroke="#d8d8d8" stroke-width="7" opacity=".35" filter="url(#bl1)"/>
</g>
<g clip-path="url(#bc)" stroke-linecap="round">
<ellipse cx="50" cy="57" rx="4" ry="8.5" transform="rotate(-28 50 57)" fill="#4a4a4a" opacity=".75"/>
<ellipse cx="72" cy="59" rx="4" ry="9" transform="rotate(25 72 59)" fill="#4a4a4a" opacity=".75"/>
<path d="M48 76 C53 80 53 88 49 93" fill="none" stroke="#e4e4e4" stroke-width="1.8"/>
<path d="M74 78 C70 82 70 88 73 93" fill="none" stroke="#e4e4e4" stroke-width="1.8"/>
<path d="M62 15 L62 37" fill="none" stroke="#303030" stroke-width="1.4"/>
<path d="M62 37 L62 71" fill="none" stroke="#181818" stroke-width="2.4"/>
<path d="M35 46 C38 44 42 43 45 43.5" fill="none" stroke="#0a0a0a" stroke-width="1.8"/>
<path d="M37 46 C35 52 35.5 58 37 63 C38 66 40 68 42 68.5" fill="none" stroke="#101010" stroke-width="1.8"/>
<ellipse cx="38.5" cy="64.5" rx="2" ry="2.6" fill="#101010"/>
<path d="M81 43 C85 46 87 50 86.5 55 C86 60 85 64 83 67.5" fill="none" stroke="#101010" stroke-width="1.8"/>
<ellipse cx="62" cy="75" rx="5" ry="3" fill="#141414"/>
<path d="M62 75 L62 95" fill="none" stroke="#141414" stroke-width="3"/>
<ellipse cx="44.5" cy="82" rx="2.6" ry="5.5" fill="#141414"/><ellipse cx="52" cy="80" rx="2" ry="2.5" fill="#181818"/><ellipse cx="55" cy="88" rx="1.6" ry="2.2" fill="#202020"/>
<ellipse cx="77.5" cy="83" rx="2.8" ry="5" fill="#141414"/><ellipse cx="70" cy="81" rx="2" ry="2.5" fill="#181818"/><ellipse cx="68" cy="89" rx="1.6" ry="2.2" fill="#202020"/>
<path d="M62 97 L62 113" fill="none" stroke="#151515" stroke-width="2"/>
</g>
</g>
</svg>
<div class="a t" style="left:788px;top:211px;font-size:11.5px;font-weight:normal;font-family:'Liberation Sans',sans-serif;color:#f4f4f4;">34</div>
<div class="a" style="left:719px;top:324px;width:270px;height:265px;border:1px solid #a5a5a5;"></div>
<div class="a t" style="left:725px;top:316px;padding:0 1px;background:#eeeeee;font-size:12.15px;font-weight:bold;font-family:'Liberation Serif',serif;color:#000;">Philips Gradient Creator Input Parameters</div>
<div class="a t" style="left:724px;top:346px;font-size:12.4px;font-weight:bold;font-family:'Liberation Sans',sans-serif;color:#d42222;letter-spacing:-0.4px;">Fatshift</div>
<div class="a" style="left:900px;top:343px;width:81px;height:25px;border:1px solid #7f8b98;background:#fff;"></div>
<div class="a" style="left:901px;top:344px;width:60px;height:23px;background:#a3b9d1;"></div>
<div class="a" style="left:961px;top:344px;width:1px;height:23px;background:#9aa6b2;"></div>
<div class="a t" style="left:903px;top:346px;font-size:12.4px;font-weight:bold;font-family:'Liberation Sans',sans-serif;color:#1e2a36;letter-spacing:-0.4px;">A</div>
<svg class="a" style="left:965px;top:353px" width="12" height="7"><path d="M0.8 0.5H11.2L6 5.6Z" fill="#1e1e1e"/></svg>
<div class="a" style="left:728px;top:380px;width:13px;height:13px;border:1px solid #7d8b99;background:linear-gradient(135deg,#f8fbff 0%,#e0ebf6 50%,#bcd3ec 100%);"></div>
<div class="a t" style="left:746px;top:377px;font-size:12.4px;font-weight:bold;font-family:'Liberation Sans',sans-serif;color:#111;letter-spacing:-0.4px;">Jones30</div>
<div class="a" style="left:904px;top:380px;width:13px;height:13px;border:1px solid #7d8b99;background:linear-gradient(135deg,#f8fbff 0%,#e0ebf6 50%,#bcd3ec 100%);"></div>
<div class="a t" style="left:921px;top:377px;font-size:12.4px;font-weight:bold;font-family:'Liberation Sans',sans-serif;color:#c4c4c4;letter-spacing:-0.4px;">Kirby</div>
<div class="a t" style="left:724px;top:407px;font-size:12.4px;font-weight:bold;font-family:'Liberation Sans',sans-serif;color:#333;letter-spacing:-0.4px;">Gradient Resolution</div>
<div class="a" style="left:900px;top:404px;width:81px;height:25px;border:1px solid #7f8b98;background:#fff;"></div>
<div class="a" style="left:961px;top:405px;width:1px;height:23px;background:#9aa6b2;"></div>
<div class="a t" style="left:903px;top:407px;font-size:12.4px;font-weight:bold;font-family:'Liberation Sans',sans-serif;color:#1e2a36;letter-spacing:-0.4px;">Medium</div>
<svg class="a" style="left:965px;top:414px" width="12" height="7"><path d="M0.8 0.5H11.2L6 5.6Z" fill="#1e1e1e"/></svg>
<div class="a t" style="left:724px;top:438px;font-size:12.4px;font-weight:bold;font-family:'Liberation Sans',sans-serif;color:#333;letter-spacing:-0.4px;">Gradient Overplus</div>
<div class="a" style="left:900px;top:435px;width:81px;height:25px;border:1px solid #7f8b98;background:#fff;"></div>
<div class="a" style="left:961px;top:436px;width:1px;height:23px;background:#9aa6b2;"></div>
<div class="a t" style="left:903px;top:438px;font-size:12.4px;font-weight:bold;font-family:'Liberation Sans',sans-serif;color:#1e2a36;letter-spacing:-0.4px;">No</div>
<svg class="a" style="left:965px;top:445px" width="12" height="7"><path d="M0.8 0.5H11.2L6 5.6Z" fill="#1e1e1e"/></svg>
<div class="a t" style="left:724px;top:469px;font-size:12.4px;font-weight:bold;font-family:'Liberation Sans',sans-serif;color:#333;letter-spacing:-0.4px;">Philips Release</div>
<div class="a" style="left:900px;top:466px;width:81px;height:25px;border:1px solid #7f8b98;background:#fff;"></div>
<div class="a" style="left:961px;top:467px;width:1px;height:23px;background:#9aa6b2;"></div>
<div class="a t" style="left:903px;top:469px;font-size:12.4px;font-weight:bold;font-family:'Liberation Sans',sans-serif;color:#1e2a36;letter-spacing:-0.4px;">Rel_1.5</div>
<svg class="a" style="left:965px;top:476px" width="12" height="7"><path d="M0.8 0.5H11.2L6 5.6Z" fill="#1e1e1e"/></svg>
<div class="a t" style="left:724px;top:500px;font-size:12.4px;font-weight:bold;font-family:'Liberation Sans',sans-serif;color:#c4c4c4;letter-spacing:-0.4px;">OS</div>
<div class="a" style="left:900px;top:497px;width:81px;height:25px;border:1px solid #a3aeb9;background:#ededed;"></div>
<div class="a" style="left:961px;top:498px;width:19px;height:23px;background:linear-gradient(#eef2f6,#c4d3e4);"></div>
<div class="a" style="left:961px;top:498px;width:1px;height:23px;background:#a9b4bf;"></div>
<div class="a t" style="left:903px;top:500px;font-size:12.4px;font-weight:bold;font-family:'Liberation Sans',sans-serif;color:#c2c2c2;letter-spacing:-0.4px;">Windows</div>
<svg class="a" style="left:965px;top:507px" width="12" height="7"><path d="M0.8 0.5H11.2L6 5.6Z" fill="#1e1e1e"/></svg>
<div class="a t" style="left:724px;top:531px;font-size:12.4px;font-weight:bold;font-family:'Liberation Sans',sans-serif;color:#c4c4c4;letter-spacing:-0.4px;">Inverted</div>
<div class="a" style="left:900px;top:528px;width:81px;height:25px;border:1px solid #a3aeb9;background:#ededed;"></div>
<div class="a" style="left:961px;top:529px;width:19px;height:23px;background:linear-gradient(#eef2f6,#c4d3e4);"></div>
<div class="a" style="left:961px;top:529px;width:1px;height:23px;background:#a9b4bf;"></div>
<div class="a t" style="left:903px;top:531px;font-size:12.4px;font-weight:bold;font-family:'Liberation Sans',sans-serif;color:#c2c2c2;letter-spacing:-0.4px;">No</div>
<svg class="a" style="left:965px;top:538px" width="12" height="7"><path d="M0.8 0.5H11.2L6 5.6Z" fill="#1e1e1e"/></svg>
<div class="a" style="left:724px;top:559px;width:170px;height:26px;border:1px solid #76879a;border-radius:2px;background:linear-gradient(#f4f7fb 0%,#eef3f8 45%,#dde7f2 55%,#cad9ea 100%);"></div>
<div class="a t" style="left:724px;width:170px;text-align:center;top:563px;font-size:12.4px;font-weight:bold;font-family:'Liberation Sans',sans-serif;color:#1e2a36;letter-spacing:-0.4px;">Compute Gradient Table</div>
<div class="a" style="left:13px;top:681px;width:987px;height:54px;border:2px solid #000;"></div>
<div class="a t" style="left:18px;top:673px;padding:0 1px;background:#eeeeee;font-size:12.5px;font-weight:bold;font-family:'Liberation Serif',serif;color:#000;">Table Options</div>
<div class="a" style="left:296px;top:707px;width:13px;height:13px;border:1px solid #7d8b99;background:linear-gradient(135deg,#f8fbff 0%,#e0ebf6 50%,#bcd3ec 100%);"></div>
<div class="a t" style="left:314px;top:704px;font-size:12.4px;font-weight:bold;font-family:'Liberation Sans',sans-serif;color:#222;letter-spacing:-0.4px;">Edit Table</div>
<div class="a" style="left:377px;top:700px;width:65px;height:26px;border:1px solid #a9a9a9;background:#f0f0f0;"></div>
<div class="a t" style="left:377px;width:65px;text-align:center;top:704px;font-size:12.4px;font-weight:bold;font-family:'Liberation Sans',sans-serif;color:#9c9c9c;letter-spacing:-0.4px;">Clear</div>
<div class="a" style="left:450px;top:707px;width:13px;height:13px;border:1px solid #8c8c8c;background:#f6f6f6;"></div>
<div class="a t" style="left:467px;top:704px;font-size:12.4px;font-weight:bold;font-family:'Liberation Sans',sans-serif;color:#a0a0a0;letter-spacing:-0.4px;">+/- x</div>
<div class="a" style="left:504px;top:707px;width:13px;height:13px;border:1px solid #8c8c8c;background:#f6f6f6;"></div>
<div class="a t" style="left:522px;top:704px;font-size:12.4px;font-weight:bold;font-family:'Liberation Sans',sans-serif;color:#a0a0a0;letter-spacing:-0.4px;">+/- y</div>
<div class="a" style="left:557px;top:707px;width:13px;height:13px;border:1px solid #8c8c8c;background:#f6f6f6;"></div>
<div class="a t" style="left:575px;top:704px;font-size:12.4px;font-weight:bold;font-family:'Liberation Sans',sans-serif;color:#a0a0a0;letter-spacing:-0.4px;">+/- z</div>
<div class="a" style="left:606px;top:700px;width:115px;height:26px;border:1px solid #76879a;border-radius:2px;background:linear-gradient(#f4f7fb 0%,#eef3f8 45%,#dde7f2 55%,#cad9ea 100%);"></div>
<div class="a t" style="left:606px;width:115px;text-align:center;top:704px;font-size:12.4px;font-weight:bold;font-family:'Liberation Sans',sans-serif;color:#1e2a36;letter-spacing:-0.4px;">Save Table As</div>
<div class="a" style="left:457px;top:742px;width:100px;height:26px;border:1px solid #76879a;border-radius:2px;background:linear-gradient(#f4f7fb 0%,#eef3f8 45%,#dde7f2 55%,#cad9ea 100%);"></div>
<div class="a t" style="left:457px;width:100px;text-align:center;top:746px;font-size:12.4px;font-weight:bold;font-family:'Liberation Sans',sans-serif;color:#1e2a36;letter-spacing:-0.4px;">Apply Table</div>
<div class="a" style="left:444px;top:783px;width:64px;height:26px;border:1px solid #a9a9a9;background:#f0f0f0;"></div>
<div class="a t" style="left:444px;width:64px;text-align:center;top:787px;font-size:12.4px;font-weight:bold;font-family:'Liberation Sans',sans-serif;color:#9c9c9c;letter-spacing:-0.4px;">Back</div>
<div class="a" style="left:512px;top:783px;width:61px;height:26px;border:1px solid #a9a9a9;background:#f0f0f0;"></div>
<div class="a t" style="left:512px;width:61px;text-align:center;top:787px;font-size:12.4px;font-weight:bold;font-family:'Liberation Sans',sans-serif;color:#9c9c9c;letter-spacing:-0.4px;">Next</div>
</body></html>
